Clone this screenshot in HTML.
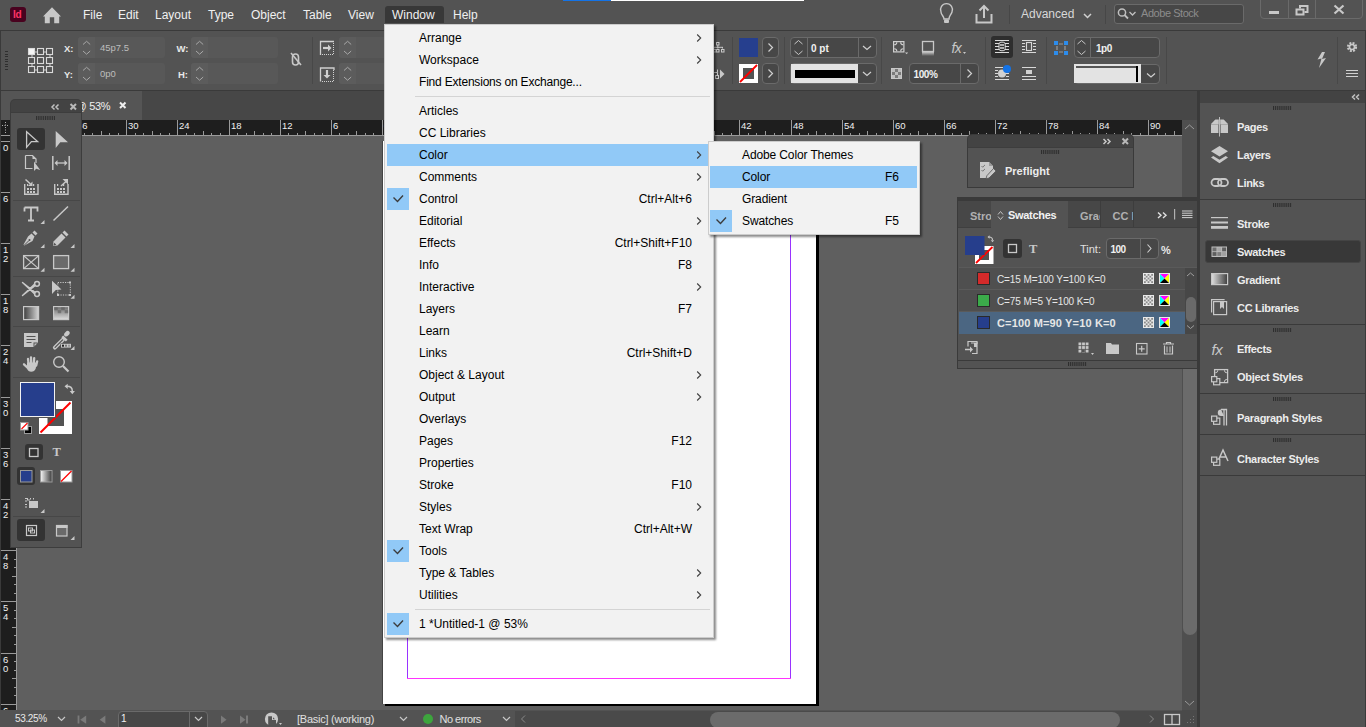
<!DOCTYPE html>
<html><head><meta charset="utf-8">
<style>
*{margin:0;padding:0;box-sizing:border-box}
html,body{width:1366px;height:727px;overflow:hidden;background:#535353;font-family:"Liberation Sans",sans-serif;position:relative}
.a{position:absolute}
.t{position:absolute;white-space:nowrap;line-height:1}
svg{position:absolute;overflow:visible}
</style></head><body>
<div class="a" style="left:0px;top:0px;width:1366px;height:30px;background:#535353;"></div>
<div class="a" style="left:0px;top:30px;width:1366px;height:1px;background:#3a3a3a;"></div>
<div class="a" style="left:10px;top:7px;width:16px;height:15px;border-radius:3px;background:#49021f"></div>
<div class="t" style="left:13px;top:10.04px;font-size:10px;color:#ff3366;font-weight:bold;letter-spacing:-0.2px">Id</div>
<svg width="1366" height="727" style="left:0;top:0" viewBox="0 0 1366 727"><path d="M43 16.5 L52 7.3 L61 16.5 L59.2 16.5 L59.2 23.3 L54.2 23.3 L54.2 17.2 L49.8 17.2 L49.8 23.3 L44.8 23.3 L44.8 16.5 Z" fill="#c8c8c8"/></svg>
<div class="a" style="left:385px;top:6px;width:59px;height:17px;background:#383838;border-radius:3px 3px 0 0"></div>
<div class="t" style="left:83px;top:8.84px;font-size:12px;color:#f0f0f0;font-weight:normal;">File</div>
<div class="t" style="left:118px;top:8.84px;font-size:12px;color:#f0f0f0;font-weight:normal;">Edit</div>
<div class="t" style="left:155px;top:8.84px;font-size:12px;color:#f0f0f0;font-weight:normal;">Layout</div>
<div class="t" style="left:208px;top:8.84px;font-size:12px;color:#f0f0f0;font-weight:normal;">Type</div>
<div class="t" style="left:251px;top:8.84px;font-size:12px;color:#f0f0f0;font-weight:normal;">Object</div>
<div class="t" style="left:303px;top:8.84px;font-size:12px;color:#f0f0f0;font-weight:normal;">Table</div>
<div class="t" style="left:348px;top:8.84px;font-size:12px;color:#f0f0f0;font-weight:normal;">View</div>
<div class="t" style="left:392px;top:8.84px;font-size:12px;color:#f0f0f0;font-weight:normal;">Window</div>
<div class="t" style="left:453px;top:8.84px;font-size:12px;color:#f0f0f0;font-weight:normal;">Help</div>
<div class="a" style="left:563px;top:0px;width:48px;height:1px;background:#1473e6;"></div>
<div class="a" style="left:611px;top:0px;width:193px;height:1px;background:#ffffff;"></div>
<svg width="1366" height="727" style="left:0;top:0" viewBox="0 0 1366 727"><path d="M941 12 a6 6 0 1 1 11 0 c-1 3 -3 4 -3 7 h-5 c0 -3 -3 -4 -3 -7z" fill="none" stroke="#c8c8c8" stroke-width="1.4"/><rect x="944" y="19.5" width="5" height="3.5" rx="1" fill="#c8c8c8"/></svg>
<svg width="1366" height="727" style="left:0;top:0" viewBox="0 0 1366 727"><path d="M976.5 14 v8.5 h15 v-8.5" fill="none" stroke="#c8c8c8" stroke-width="2"/><path d="M984 18 v-11 M979.5 10.5 l4.5 -4.5 l4.5 4.5" fill="none" stroke="#c8c8c8" stroke-width="2"/></svg>
<div class="a" style="left:1009px;top:5px;width:1px;height:19px;background:#474747;"></div>
<div class="t" style="left:1021px;top:8.34px;font-size:12px;color:#d8d8d8;font-weight:normal;">Advanced</div>
<svg width="1366" height="727" style="left:0;top:0" viewBox="0 0 1366 727"><path d="M1084 14 l3.5 3.5 l3.5 -3.5" fill="none" stroke="#d0d0d0" stroke-width="1.5"/></svg>
<div class="a" style="left:1105px;top:5px;width:1px;height:19px;background:#474747;"></div>
<div class="a" style="left:1114px;top:4px;width:130px;height:20px;border:1px solid #6a6a6a;border-radius:3px;background:#474747"></div>
<svg width="1366" height="727" style="left:0;top:0" viewBox="0 0 1366 727"><circle cx="1122" cy="12.5" r="3.6" fill="none" stroke="#c0c0c0" stroke-width="1.5"/><path d="M1124.5 15 l3.5 3.5" stroke="#c0c0c0" stroke-width="1.8"/><path d="M1129.5 12 l3 3 l3 -3" fill="none" stroke="#c0c0c0" stroke-width="1.3"/></svg>
<div class="t" style="left:1141px;top:7.69px;font-size:11px;color:#8c8c8c;font-weight:normal;letter-spacing:-0.45px">Adobe Stock</div>
<div class="a" style="left:1260px;top:-3px;width:103px;height:22px;border:1px solid #6a6a6a;border-radius:0 0 4px 4px"></div>
<div class="a" style="left:1288px;top:0px;width:1px;height:18px;background:#6a6a6a;"></div>
<div class="a" style="left:1315px;top:0px;width:1px;height:18px;background:#6a6a6a;"></div>
<div class="a" style="left:1269px;top:11px;width:10px;height:3px;background:#c8c8c8;"></div>
<svg width="1366" height="727" style="left:0;top:0" viewBox="0 0 1366 727"><rect x="1296.5" y="9.5" width="7" height="5" fill="none" stroke="#c8c8c8" stroke-width="2"/><path d="M1300 8.5 v-2.5 h7.5 v6 h-3" fill="none" stroke="#c8c8c8" stroke-width="2"/></svg>
<svg width="1366" height="727" style="left:0;top:0" viewBox="0 0 1366 727"><path d="M1334.5 5.5 l9 8 M1343.5 5.5 l-9 8" stroke="#c8c8c8" stroke-width="2.2"/></svg>
<div class="a" style="left:0px;top:31px;width:1366px;height:59px;background:#535353;"></div>
<div class="a" style="left:0px;top:30px;width:1px;height:61px;background:#3a3a3a;"></div>
<div class="a" style="left:1365px;top:30px;width:1px;height:61px;background:#3a3a3a;"></div>
<div class="a" style="left:0px;top:90px;width:1366px;height:1px;background:#3a3a3a;"></div>
<div class="a" style="left:5px;top:51.0px;width:3px;height:1px;background:#2e2e2e;"></div>
<div class="a" style="left:5px;top:53.5px;width:3px;height:1px;background:#2e2e2e;"></div>
<div class="a" style="left:5px;top:56.0px;width:3px;height:1px;background:#2e2e2e;"></div>
<div class="a" style="left:5px;top:58.5px;width:3px;height:1px;background:#2e2e2e;"></div>
<div class="a" style="left:5px;top:61.0px;width:3px;height:1px;background:#2e2e2e;"></div>
<div class="a" style="left:5px;top:63.5px;width:3px;height:1px;background:#2e2e2e;"></div>
<div class="a" style="left:5px;top:66.0px;width:3px;height:1px;background:#2e2e2e;"></div>
<div class="a" style="left:5px;top:68.5px;width:3px;height:1px;background:#2e2e2e;"></div>
<svg width="1366" height="727" style="left:0;top:0" viewBox="0 0 1366 727"><rect x="28.5" y="48.5" width="6" height="6" fill="#f4f4f4" stroke="#dadada" stroke-width="1.1"/><rect x="37.5" y="48.5" width="6" height="6" fill="none" stroke="#dadada" stroke-width="1.1"/><rect x="46.5" y="48.5" width="6" height="6" fill="none" stroke="#dadada" stroke-width="1.1"/><rect x="28.5" y="57.5" width="6" height="6" fill="none" stroke="#dadada" stroke-width="1.1"/><rect x="37.5" y="57.5" width="6" height="6" fill="none" stroke="#dadada" stroke-width="1.1"/><rect x="46.5" y="57.5" width="6" height="6" fill="none" stroke="#dadada" stroke-width="1.1"/><rect x="28.5" y="66.5" width="6" height="6" fill="none" stroke="#dadada" stroke-width="1.1"/><rect x="37.5" y="66.5" width="6" height="6" fill="none" stroke="#dadada" stroke-width="1.1"/><rect x="46.5" y="66.5" width="6" height="6" fill="none" stroke="#dadada" stroke-width="1.1"/><path d="M35 52 h2 M44 52 h2" stroke="#d0d0d0" stroke-width="1"/><path d="M35 70 h2 M44 70 h2" stroke="#d0d0d0" stroke-width="1"/><path d="M32 55 v2 M32 64 v2" stroke="#d0d0d0" stroke-width="1"/><path d="M50 55 v2 M50 64 v2" stroke="#d0d0d0" stroke-width="1"/></svg>
<div class="t" style="left:64px;top:43.96px;font-size:9.5px;color:#e8e8e8;font-weight:bold;">X:</div>
<div class="t" style="left:64px;top:69.96px;font-size:9.5px;color:#e8e8e8;font-weight:bold;">Y:</div>
<div class="a" style="left:78px;top:37px;width:87px;height:21px;background:#585858;border-radius:3px"></div>
<div class="a" style="left:78px;top:37px;width:17px;height:21px;background:#5c5c5c;border-radius:3px 0 0 3px"></div>
<svg width="1366" height="727" style="left:0;top:0" viewBox="0 0 1366 727"><path d="M83 44.5 l3.6 -3.2 l3.6 3.2 M83 51 l3.6 3.2 l3.6 -3.2" fill="none" stroke="#a8a8a8" stroke-width="1"/></svg>
<div class="a" style="left:78px;top:63px;width:87px;height:21px;background:#585858;border-radius:3px"></div>
<div class="a" style="left:78px;top:63px;width:17px;height:21px;background:#5c5c5c;border-radius:3px 0 0 3px"></div>
<svg width="1366" height="727" style="left:0;top:0" viewBox="0 0 1366 727"><path d="M83 70.5 l3.6 -3.2 l3.6 3.2 M83 77 l3.6 3.2 l3.6 -3.2" fill="none" stroke="#a8a8a8" stroke-width="1"/></svg>
<div class="t" style="left:100px;top:42.96px;font-size:9.5px;color:#bdbdbd;font-weight:normal;letter-spacing:0px">45p7.5</div>
<div class="t" style="left:100px;top:68.96px;font-size:9.5px;color:#bdbdbd;font-weight:normal;">0p0</div>
<div class="t" style="left:176.5px;top:43.96px;font-size:9.5px;color:#e8e8e8;font-weight:bold;">W:</div>
<div class="t" style="left:178px;top:69.96px;font-size:9.5px;color:#e8e8e8;font-weight:bold;">H:</div>
<div class="a" style="left:191px;top:37px;width:87px;height:21px;background:#585858;border-radius:3px"></div>
<div class="a" style="left:191px;top:37px;width:17px;height:21px;background:#5c5c5c;border-radius:3px 0 0 3px"></div>
<svg width="1366" height="727" style="left:0;top:0" viewBox="0 0 1366 727"><path d="M196 44.5 l3.6 -3.2 l3.6 3.2 M196 51 l3.6 3.2 l3.6 -3.2" fill="none" stroke="#a8a8a8" stroke-width="1"/></svg>
<div class="a" style="left:191px;top:63px;width:87px;height:21px;background:#585858;border-radius:3px"></div>
<div class="a" style="left:191px;top:63px;width:17px;height:21px;background:#5c5c5c;border-radius:3px 0 0 3px"></div>
<svg width="1366" height="727" style="left:0;top:0" viewBox="0 0 1366 727"><path d="M196 70.5 l3.6 -3.2 l3.6 3.2 M196 77 l3.6 3.2 l3.6 -3.2" fill="none" stroke="#a8a8a8" stroke-width="1"/></svg>
<svg width="1366" height="727" style="left:0;top:0" viewBox="0 0 1366 727"><path d="M291 53 l10 12" stroke="#c8c8c8" stroke-width="1.6"/><rect x="292.5" y="54" width="6" height="11" rx="3" fill="none" stroke="#c8c8c8" stroke-width="1.6"/></svg>
<div class="a" style="left:312px;top:37px;width:1px;height:47px;background:#484848;"></div>
<svg width="1366" height="727" style="left:0;top:0" viewBox="0 0 1366 727"><path d="M320.5 55 v-13.5 h13.5" fill="none" stroke="#d0d0d0" stroke-width="1.3"/><path d="M333.5 43 v11.5 h-12" fill="none" stroke="#d0d0d0" stroke-width="1" stroke-dasharray="1 1"/><path d="M323 48 h6" stroke="#d0d0d0" stroke-width="2.2"/><path d="M328 44.5 l3.5 3.5 l-3.5 3.5z" fill="#d0d0d0"/></svg>
<svg width="1366" height="727" style="left:0;top:0" viewBox="0 0 1366 727"><path d="M320.5 81.5 v-13.5 h13.5 v2" fill="none" stroke="#d0d0d0" stroke-width="1.3"/><path d="M333.5 70 v11.5 h-12" fill="none" stroke="#d0d0d0" stroke-width="1" stroke-dasharray="1 1"/><path d="M327 70 v6" stroke="#d0d0d0" stroke-width="2.2"/><path d="M323.5 75 l3.5 3.5 l3.5 -3.5z" fill="#d0d0d0"/></svg>
<div class="a" style="left:339px;top:37px;width:60px;height:21px;background:#585858;border-radius:3px"></div>
<div class="a" style="left:339px;top:37px;width:17px;height:21px;background:#5c5c5c;border-radius:3px 0 0 3px"></div>
<svg width="1366" height="727" style="left:0;top:0" viewBox="0 0 1366 727"><path d="M344 44.5 l3.6 -3.2 l3.6 3.2 M344 51 l3.6 3.2 l3.6 -3.2" fill="none" stroke="#a8a8a8" stroke-width="1"/></svg>
<div class="a" style="left:339px;top:63px;width:60px;height:21px;background:#585858;border-radius:3px"></div>
<div class="a" style="left:339px;top:63px;width:17px;height:21px;background:#5c5c5c;border-radius:3px 0 0 3px"></div>
<svg width="1366" height="727" style="left:0;top:0" viewBox="0 0 1366 727"><path d="M344 70.5 l3.6 -3.2 l3.6 3.2 M344 77 l3.6 3.2 l3.6 -3.2" fill="none" stroke="#a8a8a8" stroke-width="1"/></svg>
<svg width="1366" height="727" style="left:0;top:0" viewBox="0 0 1366 727"><rect x="716.5" y="42.5" width="2.5" height="2.5" fill="none" stroke="#c8c8c8"/><path d="M717.8 45 v2 M714 47.3 h9 M714 47 v1.5 M717.8 47 v1.5 M722.5 47 v1.5" stroke="#c8c8c8" stroke-width="1"/><rect x="713.5" y="49.5" width="2.5" height="2.5" fill="none" stroke="#c8c8c8"/><rect x="716.5" y="49.5" width="2.5" height="2.5" fill="none" stroke="#c8c8c8"/><rect x="721.5" y="49.5" width="2.5" height="2.5" fill="none" stroke="#c8c8c8"/></svg>
<svg width="1366" height="727" style="left:0;top:0" viewBox="0 0 1366 727"><path d="M713 72.5 h4.5 v3 M717.5 72.5 v-3" fill="none" stroke="#c8c8c8" stroke-width="1"/><rect x="715.5" y="75.5" width="3" height="3" fill="none" stroke="#c8c8c8"/><path d="M720 69.5 l4.5 4.5 l-4.5 4.5z" fill="#c8c8c8"/></svg>
<div class="a" style="left:732px;top:37px;width:1px;height:47px;background:#484848;"></div>
<div class="a" style="left:739px;top:38px;width:19px;height:19px;background:#263f8e;"></div>
<div class="a" style="left:762px;top:37px;width:17px;height:21px;border:1px solid #6a6a6a;border-radius:4px;background:#474747"></div>
<svg width="1366" height="727" style="left:0;top:0" viewBox="0 0 1366 727"><path d="M768.5 43.5 l4 4 l-4 4" fill="none" stroke="#d0d0d0" stroke-width="1.2"/></svg>
<div class="a" style="left:762px;top:63px;width:17px;height:21px;border:1px solid #6a6a6a;border-radius:4px;background:#474747"></div>
<svg width="1366" height="727" style="left:0;top:0" viewBox="0 0 1366 727"><path d="M768.5 69.5 l4 4 l-4 4" fill="none" stroke="#d0d0d0" stroke-width="1.2"/></svg>
<div class="a" style="left:739px;top:64px;width:19px;height:19px;background:#ffffff;"></div>
<div class="a" style="left:743px;top:68px;width:11px;height:11px;background:#535353;"></div>
<div class="a" style="left:745px;top:70px;width:7px;height:7px;background:#535353;outline:0"></div>
<svg width="1366" height="727" style="left:0;top:0" viewBox="0 0 1366 727"><path d="M740 82 L757 65" stroke="#ff0000" stroke-width="1.8"/></svg>
<div class="a" style="left:784px;top:37px;width:1px;height:47px;background:#484848;"></div>
<div class="a" style="left:790px;top:37px;width:87px;height:21px;border:1px solid #6a6a6a;border-radius:4px;background:#474747"></div>
<div class="a" style="left:807px;top:38px;width:1px;height:19px;background:#6a6a6a;"></div>
<div class="a" style="left:858px;top:38px;width:1px;height:19px;background:#6a6a6a;"></div>
<svg width="1366" height="727" style="left:0;top:0" viewBox="0 0 1366 727"><path d="M794.5 44 l4 -3.5 l4 3.5 M794.5 51 l4 3.5 l4 -3.5" fill="none" stroke="#c8c8c8" stroke-width="1"/><path d="M863 46 l4 3.5 l4 -3.5" fill="none" stroke="#d0d0d0" stroke-width="1.2"/></svg>
<div class="t" style="left:811px;top:44.03px;font-size:10px;color:#f0f0f0;font-weight:bold;">0 pt</div>
<div class="a" style="left:790px;top:63px;width:87px;height:21px;border:1px solid #6a6a6a;border-radius:4px;background:#474747"></div>
<div class="a" style="left:791px;top:64px;width:67px;height:19px;background:#e3e3e3;"></div>
<div class="a" style="left:795px;top:70px;width:60px;height:8px;background:#000000;"></div>
<svg width="1366" height="727" style="left:0;top:0" viewBox="0 0 1366 727"><path d="M863 72 l4 3.5 l4 -3.5" fill="none" stroke="#d0d0d0" stroke-width="1.2"/></svg>
<div class="a" style="left:881px;top:37px;width:1px;height:47px;background:#484848;"></div>
<svg width="1366" height="727" style="left:0;top:0" viewBox="0 0 1366 727"><rect x="893.6" y="41.6" width="10.3" height="10.3" fill="none" stroke="#d0d0d0" stroke-width="1.2"/><path d="M894.2 44.8 a2.6 2.6 0 0 0 2.6 -2.6 M900.7 42.2 a2.6 2.6 0 0 0 2.6 2.6 M894.2 48.7 a2.6 2.6 0 0 1 2.6 2.6 M903.3 48.7 a2.6 2.6 0 0 0 -2.6 2.6" fill="none" stroke="#d0d0d0" stroke-width="1.1"/><path d="M905 52.5 h3.2 l-1.6 1.8z" fill="#c8c8c8"/></svg>
<svg width="1366" height="727" style="left:0;top:0" viewBox="0 0 1366 727"><defs><linearGradient id="sh" x1="0" y1="0" x2="0" y2="1"><stop offset="0" stop-color="#c8c8c8"/><stop offset="1" stop-color="#535353"/></linearGradient></defs><rect x="922.5" y="41.5" width="11" height="10" fill="none" stroke="#c8c8c8" stroke-width="1.3"/><rect x="922" y="52" width="12" height="4" fill="url(#sh)"/></svg>
<div class="t" style="left:951.5px;top:41.15px;font-size:14px;color:#c8c8c8;font-weight:normal;font-style:italic;letter-spacing:-0.6px">fx</div>
<svg width="1366" height="727" style="left:0;top:0" viewBox="0 0 1366 727"><path d="M963 52 h3 l-1.5 2z" fill="#c8c8c8"/></svg>
<svg width="1366" height="727" style="left:0;top:0" viewBox="0 0 1366 727"><rect x="891.5" y="68.5" width="10" height="10" fill="#7a7a7a" stroke="#c8c8c8" stroke-width="1"/><rect x="892" y="69" width="3" height="3" fill="#bdbdbd"/><rect x="898" y="69" width="3" height="3" fill="#bdbdbd"/><rect x="895" y="72" width="3" height="3" fill="#bdbdbd"/><rect x="892" y="75" width="3" height="3" fill="#bdbdbd"/><rect x="898" y="75" width="3" height="3" fill="#bdbdbd"/></svg>
<div class="a" style="left:909px;top:63px;width:70px;height:21px;border:1px solid #6a6a6a;border-radius:4px;background:#474747"></div>
<div class="a" style="left:960px;top:64px;width:1px;height:19px;background:#6a6a6a;"></div>
<div class="t" style="left:913.5px;top:69.53px;font-size:10px;color:#f0f0f0;font-weight:bold;letter-spacing:-0.4px">100%</div>
<svg width="1366" height="727" style="left:0;top:0" viewBox="0 0 1366 727"><path d="M967.5 69.5 l4 4 l-4 4" fill="none" stroke="#d0d0d0" stroke-width="1.2"/></svg>
<div class="a" style="left:985px;top:37px;width:1px;height:47px;background:#484848;"></div>
<div class="a" style="left:991px;top:36px;width:22px;height:22px;background:#2e2e2e;border-radius:3px"></div>
<svg width="1366" height="727" style="left:0;top:0" viewBox="0 0 1366 727"><path d="M995 40.5 h14 M995 52.5 h14 M995 43.5 h4 M995 46.5 h4 M995 49.5 h4 M1005 43.5 h4 M1005 46.5 h4 M1005 49.5 h4" stroke="#dadada" stroke-width="1.2"/><rect x="999" y="42.2" width="6.2" height="8.5" rx="2" fill="none" stroke="#dadada" stroke-width="1"/><path d="M1000 45 h4 M1000 48 h4" stroke="#dadada" stroke-width="1.3"/></svg>
<svg width="1366" height="727" style="left:0;top:0" viewBox="0 0 1366 727"><path d="M1022 40.5 h14 M1022 52.5 h14 M1022 43.5 h3 M1022 46.5 h3 M1022 49.5 h3 M1033 43.5 h3 M1033 46.5 h3 M1033 49.5 h3" stroke="#d8d8d8" stroke-width="1.2"/><rect x="1026.5" y="42.5" width="5" height="8" fill="none" stroke="#d8d8d8" stroke-width="1.1"/></svg>
<svg width="1366" height="727" style="left:0;top:0" viewBox="0 0 1366 727"><path d="M995 67.5 h8 M995 70.5 h3 M995 73.5 h3 M995 76.5 h3 M1006 70.5 h3 M1006 73.5 h3 M1006 76.5 h3 M995 79.5 h14" stroke="#d8d8d8" stroke-width="1.2"/><circle cx="1002" cy="73.5" r="4" fill="#d0d0d0"/><circle cx="1007" cy="69" r="4" fill="#1473e6"/></svg>
<svg width="1366" height="727" style="left:0;top:0" viewBox="0 0 1366 727"><path d="M1022 67.5 h14 M1022 76.5 h14 M1022 79.5 h14" stroke="#d8d8d8" stroke-width="1.2"/><rect x="1026" y="70" width="6" height="4" fill="#d0d0d0"/></svg>
<div class="a" style="left:1046px;top:37px;width:1px;height:47px;background:#484848;"></div>
<svg width="1366" height="727" style="left:0;top:0" viewBox="0 0 1366 727"><rect x="1054" y="41" width="4" height="4" fill="#2d8ceb"/><rect x="1064" y="41" width="4" height="4" fill="#2d8ceb"/><rect x="1054" y="51" width="4" height="4" fill="#2d8ceb"/><rect x="1064" y="51" width="4" height="4" fill="#2d8ceb"/><path d="M1059 44 h4 M1059 52 h4 M1057 46 v4 M1065 46 v4" stroke="#9a9a9a" stroke-width="1.2"/></svg>
<div class="a" style="left:1074px;top:37px;width:86px;height:21px;border:1px solid #6a6a6a;border-radius:4px;background:#474747"></div>
<div class="a" style="left:1090px;top:38px;width:1px;height:19px;background:#6a6a6a;"></div>
<svg width="1366" height="727" style="left:0;top:0" viewBox="0 0 1366 727"><path d="M1077.5 44 l4 -3.5 l4 3.5 M1077.5 51 l4 3.5 l4 -3.5" fill="none" stroke="#c8c8c8" stroke-width="1"/></svg>
<div class="t" style="left:1096px;top:43.53px;font-size:10px;color:#f0f0f0;font-weight:bold;letter-spacing:-0.5px">1p0</div>
<div class="a" style="left:1074px;top:64px;width:86px;height:20px;border:1px solid #6a6a6a;border-radius:4px;background:#474747"></div>
<div class="a" style="left:1074px;top:64px;width:67px;height:19px;background:#e3e3e3;"></div>
<div class="a" style="left:1076px;top:66px;width:61px;height:2px;background:#555555;"></div>
<div class="a" style="left:1136px;top:66px;width:2px;height:16px;background:#000000;"></div>
<svg width="1366" height="727" style="left:0;top:0" viewBox="0 0 1366 727"><path d="M1147 73.5 l4 3.5 l4 -3.5" fill="none" stroke="#d0d0d0" stroke-width="1.2"/></svg>
<div class="a" style="left:1166px;top:37px;width:1px;height:47px;background:#484848;"></div>
<svg width="1366" height="727" style="left:0;top:0" viewBox="0 0 1366 727"><path d="M1322 52 l-4.5 7.5 l4 -1 l-2.5 9.5 l7 -10 l-4 1 l3 -7z" fill="#c8c8c8"/></svg>
<div class="a" style="left:1337px;top:37px;width:1px;height:47px;background:#484848;"></div>
<svg width="1366" height="727" style="left:0;top:0" viewBox="0 0 1366 727"><circle cx="1352" cy="47" r="3.8" fill="none" stroke="#c8c8c8" stroke-width="2.6" stroke-dasharray="1.8 1.2"/><circle cx="1352" cy="47" r="2.5" fill="none" stroke="#c8c8c8" stroke-width="1.6"/></svg>
<svg width="1366" height="727" style="left:0;top:0" viewBox="0 0 1366 727"><path d="M1346 70.5 h12 M1346 73.5 h12 M1346 76.5 h12" stroke="#d0d0d0" stroke-width="1.2"/></svg>
<div class="a" style="left:0px;top:91px;width:1197px;height:29px;background:#474747;"></div>
<div class="a" style="left:1px;top:91px;width:141px;height:29px;background:#555555;"></div>
<div class="a" style="left:1px;top:120px;width:1181px;height:16px;background:#1e1e1e;"></div>
<div class="a" style="left:16px;top:135px;width:1166px;height:1px;background:#9a9a9a;"></div>
<div class="a" style="left:1px;top:136px;width:15px;height:574px;background:#1e1e1e;"></div>
<div class="a" style="left:16px;top:136px;width:1px;height:574px;background:#9a9a9a;"></div>
<div class="a" style="left:0px;top:91px;width:1px;height:636px;background:#3a3a3a;"></div>
<div class="a" style="left:17px;top:136px;width:1165px;height:574px;background:#5f5f5f;"></div>
<div class="a" style="left:385px;top:143px;width:434px;height:563px;background:#000;"></div>
<div class="a" style="left:383px;top:141px;width:433px;height:563px;background:#fff;"></div>
<div class="a" style="left:407px;top:167px;width:1px;height:511px;background:#9933ff;"></div>
<div class="a" style="left:790px;top:167px;width:1px;height:511px;background:#9933ff;"></div>
<div class="a" style="left:407px;top:678px;width:384px;height:1px;background:#ff33ff;"></div>
<div class="a" style="left:1182px;top:120px;width:15px;height:590px;background:#4f4f4f;"></div>
<div class="a" style="left:1183px;top:240px;width:14px;height:395px;border-radius:7px;background:#6b6b6b"></div>
<div class="a" style="left:1197px;top:91px;width:3px;height:636px;background:#3a3a3a;"></div>
<div class="a" style="left:1200px;top:91px;width:166px;height:12px;background:#434343;"></div>
<div class="a" style="left:0px;top:710px;width:1197px;height:17px;background:#535353;"></div>
<div class="a" style="left:515px;top:710px;width:682px;height:17px;background:#4a4a4a;"></div>
<div class="a" style="left:710px;top:712px;width:410px;height:16px;border-radius:8px;background:#6b6b6b"></div>
<svg width="1366" height="727" style="left:0;top:0" viewBox="0 0 1366 727"><path d="M24.5 120 v15" stroke="#9a9a9a" stroke-width="1"/><path d="M33.5 133 v2" stroke="#9a9a9a" stroke-width="1"/><path d="M41.5 133 v2" stroke="#9a9a9a" stroke-width="1"/><path d="M50.5 131 v4" stroke="#9a9a9a" stroke-width="1"/><path d="M58.5 133 v2" stroke="#9a9a9a" stroke-width="1"/><path d="M67.5 133 v2" stroke="#9a9a9a" stroke-width="1"/><path d="M75.5 120 v15" stroke="#9a9a9a" stroke-width="1"/><path d="M84.5 133 v2" stroke="#9a9a9a" stroke-width="1"/><path d="M92.5 133 v2" stroke="#9a9a9a" stroke-width="1"/><path d="M101.5 131 v4" stroke="#9a9a9a" stroke-width="1"/><path d="M109.5 133 v2" stroke="#9a9a9a" stroke-width="1"/><path d="M118.5 133 v2" stroke="#9a9a9a" stroke-width="1"/><path d="M126.5 120 v15" stroke="#9a9a9a" stroke-width="1"/><path d="M135.5 133 v2" stroke="#9a9a9a" stroke-width="1"/><path d="M143.5 133 v2" stroke="#9a9a9a" stroke-width="1"/><path d="M152.5 131 v4" stroke="#9a9a9a" stroke-width="1"/><path d="M160.5 133 v2" stroke="#9a9a9a" stroke-width="1"/><path d="M169.5 133 v2" stroke="#9a9a9a" stroke-width="1"/><path d="M177.5 120 v15" stroke="#9a9a9a" stroke-width="1"/><path d="M186.5 133 v2" stroke="#9a9a9a" stroke-width="1"/><path d="M194.5 133 v2" stroke="#9a9a9a" stroke-width="1"/><path d="M203.5 131 v4" stroke="#9a9a9a" stroke-width="1"/><path d="M211.5 133 v2" stroke="#9a9a9a" stroke-width="1"/><path d="M220.5 133 v2" stroke="#9a9a9a" stroke-width="1"/><path d="M229.5 120 v15" stroke="#9a9a9a" stroke-width="1"/><path d="M237.5 133 v2" stroke="#9a9a9a" stroke-width="1"/><path d="M246.5 133 v2" stroke="#9a9a9a" stroke-width="1"/><path d="M254.5 131 v4" stroke="#9a9a9a" stroke-width="1"/><path d="M263.5 133 v2" stroke="#9a9a9a" stroke-width="1"/><path d="M271.5 133 v2" stroke="#9a9a9a" stroke-width="1"/><path d="M280.5 120 v15" stroke="#9a9a9a" stroke-width="1"/><path d="M288.5 133 v2" stroke="#9a9a9a" stroke-width="1"/><path d="M297.5 133 v2" stroke="#9a9a9a" stroke-width="1"/><path d="M305.5 131 v4" stroke="#9a9a9a" stroke-width="1"/><path d="M314.5 133 v2" stroke="#9a9a9a" stroke-width="1"/><path d="M322.5 133 v2" stroke="#9a9a9a" stroke-width="1"/><path d="M331.5 120 v15" stroke="#9a9a9a" stroke-width="1"/><path d="M339.5 133 v2" stroke="#9a9a9a" stroke-width="1"/><path d="M348.5 133 v2" stroke="#9a9a9a" stroke-width="1"/><path d="M356.5 131 v4" stroke="#9a9a9a" stroke-width="1"/><path d="M365.5 133 v2" stroke="#9a9a9a" stroke-width="1"/><path d="M373.5 133 v2" stroke="#9a9a9a" stroke-width="1"/><path d="M382.5 120 v15" stroke="#9a9a9a" stroke-width="1"/><path d="M390.5 133 v2" stroke="#9a9a9a" stroke-width="1"/><path d="M399.5 133 v2" stroke="#9a9a9a" stroke-width="1"/><path d="M407.5 131 v4" stroke="#9a9a9a" stroke-width="1"/><path d="M416.5 133 v2" stroke="#9a9a9a" stroke-width="1"/><path d="M424.5 133 v2" stroke="#9a9a9a" stroke-width="1"/><path d="M433.5 120 v15" stroke="#9a9a9a" stroke-width="1"/><path d="M441.5 133 v2" stroke="#9a9a9a" stroke-width="1"/><path d="M450.5 133 v2" stroke="#9a9a9a" stroke-width="1"/><path d="M458.5 131 v4" stroke="#9a9a9a" stroke-width="1"/><path d="M467.5 133 v2" stroke="#9a9a9a" stroke-width="1"/><path d="M475.5 133 v2" stroke="#9a9a9a" stroke-width="1"/><path d="M484.5 120 v15" stroke="#9a9a9a" stroke-width="1"/><path d="M493.5 133 v2" stroke="#9a9a9a" stroke-width="1"/><path d="M501.5 133 v2" stroke="#9a9a9a" stroke-width="1"/><path d="M510.5 131 v4" stroke="#9a9a9a" stroke-width="1"/><path d="M518.5 133 v2" stroke="#9a9a9a" stroke-width="1"/><path d="M527.5 133 v2" stroke="#9a9a9a" stroke-width="1"/><path d="M535.5 120 v15" stroke="#9a9a9a" stroke-width="1"/><path d="M544.5 133 v2" stroke="#9a9a9a" stroke-width="1"/><path d="M552.5 133 v2" stroke="#9a9a9a" stroke-width="1"/><path d="M561.5 131 v4" stroke="#9a9a9a" stroke-width="1"/><path d="M569.5 133 v2" stroke="#9a9a9a" stroke-width="1"/><path d="M578.5 133 v2" stroke="#9a9a9a" stroke-width="1"/><path d="M586.5 120 v15" stroke="#9a9a9a" stroke-width="1"/><path d="M595.5 133 v2" stroke="#9a9a9a" stroke-width="1"/><path d="M603.5 133 v2" stroke="#9a9a9a" stroke-width="1"/><path d="M612.5 131 v4" stroke="#9a9a9a" stroke-width="1"/><path d="M620.5 133 v2" stroke="#9a9a9a" stroke-width="1"/><path d="M629.5 133 v2" stroke="#9a9a9a" stroke-width="1"/><path d="M637.5 120 v15" stroke="#9a9a9a" stroke-width="1"/><path d="M646.5 133 v2" stroke="#9a9a9a" stroke-width="1"/><path d="M654.5 133 v2" stroke="#9a9a9a" stroke-width="1"/><path d="M663.5 131 v4" stroke="#9a9a9a" stroke-width="1"/><path d="M671.5 133 v2" stroke="#9a9a9a" stroke-width="1"/><path d="M680.5 133 v2" stroke="#9a9a9a" stroke-width="1"/><path d="M688.5 120 v15" stroke="#9a9a9a" stroke-width="1"/><path d="M697.5 133 v2" stroke="#9a9a9a" stroke-width="1"/><path d="M705.5 133 v2" stroke="#9a9a9a" stroke-width="1"/><path d="M714.5 131 v4" stroke="#9a9a9a" stroke-width="1"/><path d="M722.5 133 v2" stroke="#9a9a9a" stroke-width="1"/><path d="M731.5 133 v2" stroke="#9a9a9a" stroke-width="1"/><path d="M739.5 120 v15" stroke="#9a9a9a" stroke-width="1"/><path d="M748.5 133 v2" stroke="#9a9a9a" stroke-width="1"/><path d="M756.5 133 v2" stroke="#9a9a9a" stroke-width="1"/><path d="M765.5 131 v4" stroke="#9a9a9a" stroke-width="1"/><path d="M774.5 133 v2" stroke="#9a9a9a" stroke-width="1"/><path d="M782.5 133 v2" stroke="#9a9a9a" stroke-width="1"/><path d="M791.5 120 v15" stroke="#9a9a9a" stroke-width="1"/><path d="M799.5 133 v2" stroke="#9a9a9a" stroke-width="1"/><path d="M808.5 133 v2" stroke="#9a9a9a" stroke-width="1"/><path d="M816.5 131 v4" stroke="#9a9a9a" stroke-width="1"/><path d="M825.5 133 v2" stroke="#9a9a9a" stroke-width="1"/><path d="M833.5 133 v2" stroke="#9a9a9a" stroke-width="1"/><path d="M842.5 120 v15" stroke="#9a9a9a" stroke-width="1"/><path d="M850.5 133 v2" stroke="#9a9a9a" stroke-width="1"/><path d="M859.5 133 v2" stroke="#9a9a9a" stroke-width="1"/><path d="M867.5 131 v4" stroke="#9a9a9a" stroke-width="1"/><path d="M876.5 133 v2" stroke="#9a9a9a" stroke-width="1"/><path d="M884.5 133 v2" stroke="#9a9a9a" stroke-width="1"/><path d="M893.5 120 v15" stroke="#9a9a9a" stroke-width="1"/><path d="M901.5 133 v2" stroke="#9a9a9a" stroke-width="1"/><path d="M910.5 133 v2" stroke="#9a9a9a" stroke-width="1"/><path d="M918.5 131 v4" stroke="#9a9a9a" stroke-width="1"/><path d="M927.5 133 v2" stroke="#9a9a9a" stroke-width="1"/><path d="M935.5 133 v2" stroke="#9a9a9a" stroke-width="1"/><path d="M944.5 120 v15" stroke="#9a9a9a" stroke-width="1"/><path d="M952.5 133 v2" stroke="#9a9a9a" stroke-width="1"/><path d="M961.5 133 v2" stroke="#9a9a9a" stroke-width="1"/><path d="M969.5 131 v4" stroke="#9a9a9a" stroke-width="1"/><path d="M978.5 133 v2" stroke="#9a9a9a" stroke-width="1"/><path d="M986.5 133 v2" stroke="#9a9a9a" stroke-width="1"/><path d="M995.5 120 v15" stroke="#9a9a9a" stroke-width="1"/><path d="M1003.5 133 v2" stroke="#9a9a9a" stroke-width="1"/><path d="M1012.5 133 v2" stroke="#9a9a9a" stroke-width="1"/><path d="M1020.5 131 v4" stroke="#9a9a9a" stroke-width="1"/><path d="M1029.5 133 v2" stroke="#9a9a9a" stroke-width="1"/><path d="M1038.5 133 v2" stroke="#9a9a9a" stroke-width="1"/><path d="M1046.5 120 v15" stroke="#9a9a9a" stroke-width="1"/><path d="M1055.5 133 v2" stroke="#9a9a9a" stroke-width="1"/><path d="M1063.5 133 v2" stroke="#9a9a9a" stroke-width="1"/><path d="M1072.5 131 v4" stroke="#9a9a9a" stroke-width="1"/><path d="M1080.5 133 v2" stroke="#9a9a9a" stroke-width="1"/><path d="M1089.5 133 v2" stroke="#9a9a9a" stroke-width="1"/><path d="M1097.5 120 v15" stroke="#9a9a9a" stroke-width="1"/><path d="M1106.5 133 v2" stroke="#9a9a9a" stroke-width="1"/><path d="M1114.5 133 v2" stroke="#9a9a9a" stroke-width="1"/><path d="M1123.5 131 v4" stroke="#9a9a9a" stroke-width="1"/><path d="M1131.5 133 v2" stroke="#9a9a9a" stroke-width="1"/><path d="M1140.5 133 v2" stroke="#9a9a9a" stroke-width="1"/><path d="M1148.5 120 v15" stroke="#9a9a9a" stroke-width="1"/><path d="M1157.5 133 v2" stroke="#9a9a9a" stroke-width="1"/><path d="M1165.5 133 v2" stroke="#9a9a9a" stroke-width="1"/><path d="M1174.5 131 v4" stroke="#9a9a9a" stroke-width="1"/><path d="M1 141.5 h15" stroke="#9a9a9a" stroke-width="1"/><path d="M14 149.5 h2" stroke="#9a9a9a" stroke-width="1"/><path d="M14 158.5 h2" stroke="#9a9a9a" stroke-width="1"/><path d="M12 166.5 h4" stroke="#9a9a9a" stroke-width="1"/><path d="M14 175.5 h2" stroke="#9a9a9a" stroke-width="1"/><path d="M14 183.5 h2" stroke="#9a9a9a" stroke-width="1"/><path d="M1 192.5 h15" stroke="#9a9a9a" stroke-width="1"/><path d="M14 200.5 h2" stroke="#9a9a9a" stroke-width="1"/><path d="M14 209.5 h2" stroke="#9a9a9a" stroke-width="1"/><path d="M12 218.5 h4" stroke="#9a9a9a" stroke-width="1"/><path d="M14 226.5 h2" stroke="#9a9a9a" stroke-width="1"/><path d="M14 235.5 h2" stroke="#9a9a9a" stroke-width="1"/><path d="M1 243.5 h15" stroke="#9a9a9a" stroke-width="1"/><path d="M14 252.5 h2" stroke="#9a9a9a" stroke-width="1"/><path d="M14 260.5 h2" stroke="#9a9a9a" stroke-width="1"/><path d="M12 269.5 h4" stroke="#9a9a9a" stroke-width="1"/><path d="M14 277.5 h2" stroke="#9a9a9a" stroke-width="1"/><path d="M14 286.5 h2" stroke="#9a9a9a" stroke-width="1"/><path d="M1 294.5 h15" stroke="#9a9a9a" stroke-width="1"/><path d="M14 303.5 h2" stroke="#9a9a9a" stroke-width="1"/><path d="M14 311.5 h2" stroke="#9a9a9a" stroke-width="1"/><path d="M12 320.5 h4" stroke="#9a9a9a" stroke-width="1"/><path d="M14 328.5 h2" stroke="#9a9a9a" stroke-width="1"/><path d="M14 337.5 h2" stroke="#9a9a9a" stroke-width="1"/><path d="M1 345.5 h15" stroke="#9a9a9a" stroke-width="1"/><path d="M14 354.5 h2" stroke="#9a9a9a" stroke-width="1"/><path d="M14 363.5 h2" stroke="#9a9a9a" stroke-width="1"/><path d="M12 371.5 h4" stroke="#9a9a9a" stroke-width="1"/><path d="M14 380.5 h2" stroke="#9a9a9a" stroke-width="1"/><path d="M14 388.5 h2" stroke="#9a9a9a" stroke-width="1"/><path d="M1 397.5 h15" stroke="#9a9a9a" stroke-width="1"/><path d="M14 405.5 h2" stroke="#9a9a9a" stroke-width="1"/><path d="M14 414.5 h2" stroke="#9a9a9a" stroke-width="1"/><path d="M12 422.5 h4" stroke="#9a9a9a" stroke-width="1"/><path d="M14 431.5 h2" stroke="#9a9a9a" stroke-width="1"/><path d="M14 439.5 h2" stroke="#9a9a9a" stroke-width="1"/><path d="M1 448.5 h15" stroke="#9a9a9a" stroke-width="1"/><path d="M14 456.5 h2" stroke="#9a9a9a" stroke-width="1"/><path d="M14 465.5 h2" stroke="#9a9a9a" stroke-width="1"/><path d="M12 473.5 h4" stroke="#9a9a9a" stroke-width="1"/><path d="M14 482.5 h2" stroke="#9a9a9a" stroke-width="1"/><path d="M14 490.5 h2" stroke="#9a9a9a" stroke-width="1"/><path d="M1 499.5 h15" stroke="#9a9a9a" stroke-width="1"/><path d="M14 508.5 h2" stroke="#9a9a9a" stroke-width="1"/><path d="M14 516.5 h2" stroke="#9a9a9a" stroke-width="1"/><path d="M12 525.5 h4" stroke="#9a9a9a" stroke-width="1"/><path d="M14 533.5 h2" stroke="#9a9a9a" stroke-width="1"/><path d="M14 542.5 h2" stroke="#9a9a9a" stroke-width="1"/><path d="M1 550.5 h15" stroke="#9a9a9a" stroke-width="1"/><path d="M14 559.5 h2" stroke="#9a9a9a" stroke-width="1"/><path d="M14 567.5 h2" stroke="#9a9a9a" stroke-width="1"/><path d="M12 576.5 h4" stroke="#9a9a9a" stroke-width="1"/><path d="M14 584.5 h2" stroke="#9a9a9a" stroke-width="1"/><path d="M14 593.5 h2" stroke="#9a9a9a" stroke-width="1"/><path d="M1 601.5 h15" stroke="#9a9a9a" stroke-width="1"/><path d="M14 610.5 h2" stroke="#9a9a9a" stroke-width="1"/><path d="M14 618.5 h2" stroke="#9a9a9a" stroke-width="1"/><path d="M12 627.5 h4" stroke="#9a9a9a" stroke-width="1"/><path d="M14 635.5 h2" stroke="#9a9a9a" stroke-width="1"/><path d="M14 644.5 h2" stroke="#9a9a9a" stroke-width="1"/><path d="M1 653.5 h15" stroke="#9a9a9a" stroke-width="1"/><path d="M14 661.5 h2" stroke="#9a9a9a" stroke-width="1"/><path d="M14 670.5 h2" stroke="#9a9a9a" stroke-width="1"/><path d="M12 678.5 h4" stroke="#9a9a9a" stroke-width="1"/><path d="M14 687.5 h2" stroke="#9a9a9a" stroke-width="1"/><path d="M14 695.5 h2" stroke="#9a9a9a" stroke-width="1"/><path d="M1 704.5 h15" stroke="#9a9a9a" stroke-width="1"/><path d="M1 135.5 h15" stroke="#9a9a9a"/><path d="M5.5 122 v12" stroke="#b0b0b0" stroke-dasharray="1 1.5"/><path d="M2 125.5 h7" stroke="#b0b0b0" stroke-dasharray="1 1.5"/></svg>
<div class="t" style="left:26px;top:120.96px;font-size:9.5px;color:#f0f0f0;font-weight:normal;">42</div>
<div class="t" style="left:77px;top:120.96px;font-size:9.5px;color:#f0f0f0;font-weight:normal;">36</div>
<div class="t" style="left:128px;top:120.96px;font-size:9.5px;color:#f0f0f0;font-weight:normal;">30</div>
<div class="t" style="left:179px;top:120.96px;font-size:9.5px;color:#f0f0f0;font-weight:normal;">24</div>
<div class="t" style="left:231px;top:120.96px;font-size:9.5px;color:#f0f0f0;font-weight:normal;">18</div>
<div class="t" style="left:282px;top:120.96px;font-size:9.5px;color:#f0f0f0;font-weight:normal;">12</div>
<div class="t" style="left:333px;top:120.96px;font-size:9.5px;color:#f0f0f0;font-weight:normal;">6</div>
<div class="t" style="left:384px;top:120.96px;font-size:9.5px;color:#f0f0f0;font-weight:normal;">0</div>
<div class="t" style="left:435px;top:120.96px;font-size:9.5px;color:#f0f0f0;font-weight:normal;">6</div>
<div class="t" style="left:486px;top:120.96px;font-size:9.5px;color:#f0f0f0;font-weight:normal;">12</div>
<div class="t" style="left:537px;top:120.96px;font-size:9.5px;color:#f0f0f0;font-weight:normal;">18</div>
<div class="t" style="left:588px;top:120.96px;font-size:9.5px;color:#f0f0f0;font-weight:normal;">24</div>
<div class="t" style="left:639px;top:120.96px;font-size:9.5px;color:#f0f0f0;font-weight:normal;">30</div>
<div class="t" style="left:690px;top:120.96px;font-size:9.5px;color:#f0f0f0;font-weight:normal;">36</div>
<div class="t" style="left:741px;top:120.96px;font-size:9.5px;color:#f0f0f0;font-weight:normal;">42</div>
<div class="t" style="left:793px;top:120.96px;font-size:9.5px;color:#f0f0f0;font-weight:normal;">48</div>
<div class="t" style="left:844px;top:120.96px;font-size:9.5px;color:#f0f0f0;font-weight:normal;">54</div>
<div class="t" style="left:895px;top:120.96px;font-size:9.5px;color:#f0f0f0;font-weight:normal;">60</div>
<div class="t" style="left:946px;top:120.96px;font-size:9.5px;color:#f0f0f0;font-weight:normal;">66</div>
<div class="t" style="left:997px;top:120.96px;font-size:9.5px;color:#f0f0f0;font-weight:normal;">72</div>
<div class="t" style="left:1048px;top:120.96px;font-size:9.5px;color:#f0f0f0;font-weight:normal;">78</div>
<div class="t" style="left:1099px;top:120.96px;font-size:9.5px;color:#f0f0f0;font-weight:normal;">84</div>
<div class="t" style="left:1150px;top:120.96px;font-size:9.5px;color:#f0f0f0;font-weight:normal;">90</div>
<div class="t" style="left:3px;top:142.96px;font-size:9.5px;color:#f0f0f0;font-weight:normal;">0</div>
<div class="t" style="left:3px;top:193.96px;font-size:9.5px;color:#f0f0f0;font-weight:normal;">6</div>
<div class="t" style="left:3px;top:244.96px;font-size:9.5px;color:#f0f0f0;font-weight:normal;">1</div>
<div class="t" style="left:3px;top:253.96px;font-size:9.5px;color:#f0f0f0;font-weight:normal;">2</div>
<div class="t" style="left:3px;top:295.96px;font-size:9.5px;color:#f0f0f0;font-weight:normal;">1</div>
<div class="t" style="left:3px;top:304.96px;font-size:9.5px;color:#f0f0f0;font-weight:normal;">8</div>
<div class="t" style="left:3px;top:346.96px;font-size:9.5px;color:#f0f0f0;font-weight:normal;">2</div>
<div class="t" style="left:3px;top:355.96px;font-size:9.5px;color:#f0f0f0;font-weight:normal;">4</div>
<div class="t" style="left:3px;top:398.96px;font-size:9.5px;color:#f0f0f0;font-weight:normal;">3</div>
<div class="t" style="left:3px;top:407.96px;font-size:9.5px;color:#f0f0f0;font-weight:normal;">0</div>
<div class="t" style="left:3px;top:449.96px;font-size:9.5px;color:#f0f0f0;font-weight:normal;">3</div>
<div class="t" style="left:3px;top:458.96px;font-size:9.5px;color:#f0f0f0;font-weight:normal;">6</div>
<div class="t" style="left:3px;top:500.96px;font-size:9.5px;color:#f0f0f0;font-weight:normal;">4</div>
<div class="t" style="left:3px;top:509.96px;font-size:9.5px;color:#f0f0f0;font-weight:normal;">2</div>
<div class="t" style="left:3px;top:551.96px;font-size:9.5px;color:#f0f0f0;font-weight:normal;">4</div>
<div class="t" style="left:3px;top:560.96px;font-size:9.5px;color:#f0f0f0;font-weight:normal;">8</div>
<div class="t" style="left:3px;top:602.96px;font-size:9.5px;color:#f0f0f0;font-weight:normal;">5</div>
<div class="t" style="left:3px;top:611.96px;font-size:9.5px;color:#f0f0f0;font-weight:normal;">4</div>
<div class="t" style="left:3px;top:654.96px;font-size:9.5px;color:#f0f0f0;font-weight:normal;">6</div>
<div class="t" style="left:3px;top:663.96px;font-size:9.5px;color:#f0f0f0;font-weight:normal;">0</div>
<div class="t" style="left:3px;top:705.96px;font-size:9.5px;color:#f0f0f0;font-weight:normal;">6</div>
<div class="t" style="left:110.3px;top:100.69px;font-size:11px;color:#f0f0f0;font-weight:normal;transform:translateX(-100%);letter-spacing:-0.3px">*Untitled-1 @ 53%</div>
<svg width="1366" height="727" style="left:0;top:0" viewBox="0 0 1366 727"><path d="M120 102.5 l5.5 5.5 M125.5 102.5 l-5.5 5.5" stroke="#f0f0f0" stroke-width="2"/></svg>
<div class="a" style="left:0px;top:710px;width:1197px;height:17px;background:#535353;"></div>
<div class="a" style="left:515px;top:711px;width:667px;height:16px;background:#4a4a4a;"></div>
<div class="a" style="left:710px;top:712px;width:410px;height:16px;border-radius:8px;background:#6b6b6b"></div>
<div class="a" style="left:1182px;top:710px;width:15px;height:17px;background:#4a4a4a;"></div>
<div class="t" style="left:15px;top:713.53px;font-size:10px;color:#e8e8e8;font-weight:normal;letter-spacing:-0.35px">53.25%</div>
<svg width="1366" height="727" style="left:0;top:0" viewBox="0 0 1366 727"><path d="M58 717 l3.5 3.5 l3.5 -3.5" fill="none" stroke="#c8c8c8" stroke-width="1.2"/></svg>
<svg width="1366" height="727" style="left:0;top:0" viewBox="0 0 1366 727"><rect x="77.6" y="715.5" width="1.8" height="8" fill="#7a7a7a"/><path d="M86.2 715.5 v8.3 l-6 -4.15z" fill="#7a7a7a"/><path d="M105.4 715.5 v8.3 l-5.7 -4.15z" fill="#7a7a7a"/></svg>
<div class="a" style="left:118px;top:711px;width:90px;height:20px;border:1px solid #6a6a6a;border-radius:4px;background:#474747"></div>
<div class="a" style="left:189px;top:712px;width:1px;height:15px;background:#6a6a6a;"></div>
<div class="t" style="left:121px;top:713.53px;font-size:10px;color:#f0f0f0;font-weight:normal;">1</div>
<svg width="1366" height="727" style="left:0;top:0" viewBox="0 0 1366 727"><path d="M195 717 l3.5 3.5 l3.5 -3.5" fill="none" stroke="#c8c8c8" stroke-width="1.2"/></svg>
<svg width="1366" height="727" style="left:0;top:0" viewBox="0 0 1366 727"><path d="M221 715.5 v8.3 l5.5 -4.15z" fill="#7a7a7a"/><path d="M240 715.5 v8.3 l5.5 -4.15z" fill="#7a7a7a"/><rect x="246" y="715.5" width="2" height="8" fill="#7a7a7a"/></svg>
<svg width="1366" height="727" style="left:0;top:0" viewBox="0 0 1366 727"><circle cx="271.5" cy="719" r="6.6" fill="#c8c8c8"/><path d="M268.2 716.2 h3.8 v3.8 h4 v7 h-7.8z" fill="#535353"/><path d="M273 717.3 l2 2 h-2z" fill="#535353"/><rect x="260" y="725.6" width="20" height="2" fill="#535353"/><path d="M279 723 h3 l-1.5 2z" fill="#c8c8c8"/></svg>
<div class="t" style="left:297px;top:713.69px;font-size:11px;color:#e0e0e0;font-weight:normal;letter-spacing:-0.25px">[Basic] (working)</div>
<svg width="1366" height="727" style="left:0;top:0" viewBox="0 0 1366 727"><path d="M400 717 l3.5 3.5 l3.5 -3.5" fill="none" stroke="#c8c8c8" stroke-width="1.2"/></svg>
<svg width="1366" height="727" style="left:0;top:0" viewBox="0 0 1366 727"><circle cx="428" cy="719" r="5" fill="#3da53d"/></svg>
<div class="t" style="left:439.5px;top:713.69px;font-size:11px;color:#e0e0e0;font-weight:normal;letter-spacing:-0.5px">No errors</div>
<svg width="1366" height="727" style="left:0;top:0" viewBox="0 0 1366 727"><path d="M503 717 l3.5 3.5 l3.5 -3.5" fill="none" stroke="#c8c8c8" stroke-width="1.2"/></svg>
<svg width="1366" height="727" style="left:0;top:0" viewBox="0 0 1366 727"><path d="M525 715.5 l-3.5 3.5 l3.5 3.5" fill="none" stroke="#8a8a8a" stroke-width="1"/><path d="M1150 715.5 l3.5 3.5 l-3.5 3.5" fill="none" stroke="#8a8a8a" stroke-width="1"/></svg>
<svg width="1366" height="727" style="left:0;top:0" viewBox="0 0 1366 727"><rect x="1164.5" y="714.5" width="15" height="10" fill="none" stroke="#c8c8c8" stroke-width="1.3"/><path d="M1172 714.5 v10" stroke="#c8c8c8" stroke-width="1.3"/></svg>
<svg width="1366" height="727" style="left:0;top:0" viewBox="0 0 1366 727"><path d="M1194 715 v10 h-10z" fill="none"/><g fill="#777"><rect x="1193" y="716" width="1" height="1"/><rect x="1193" y="719" width="1" height="1"/><rect x="1193" y="722" width="1" height="1"/><rect x="1190" y="719" width="1" height="1"/><rect x="1190" y="722" width="1" height="1"/><rect x="1187" y="722" width="1" height="1"/></g></svg>
<svg width="1366" height="727" style="left:0;top:0" viewBox="0 0 1366 727"><path d="M1185 129 l4.5 -4 l4.5 4" fill="none" stroke="#9a9a9a" stroke-width="1"/><path d="M1185 701 l4.5 4 l4.5 -4" fill="none" stroke="#9a9a9a" stroke-width="1"/></svg>
<div class="a" style="left:10px;top:99px;width:72px;height:449px;background:#3d3d3d;border-radius:5px 5px 0 0"></div>
<div class="a" style="left:11px;top:100px;width:70px;height:12px;background:#434343;border-radius:4px 4px 0 0"></div>
<div class="a" style="left:11px;top:112px;width:70px;height:435px;background:#535353;"></div>
<div class="a" style="left:11px;top:112px;width:70px;height:1px;background:#3d3d3d;"></div>
<svg width="1366" height="727" style="left:0;top:0" viewBox="0 0 1366 727"><path d="M54.5 104.5 l-2.5 2.5 l2.5 2.5 M58.5 104.5 l-2.5 2.5 l2.5 2.5" fill="none" stroke="#c0c0c0" stroke-width="1.5"/><path d="M70.5 104 l5.5 5.5 M76 104 l-5.5 5.5" stroke="#b8b8b8" stroke-width="2"/><rect x="36.0" y="116" width="0.9" height="4" fill="#2e2e2e"/><rect x="37.8" y="116" width="0.9" height="4" fill="#2e2e2e"/><rect x="39.6" y="116" width="0.9" height="4" fill="#2e2e2e"/><rect x="41.4" y="116" width="0.9" height="4" fill="#2e2e2e"/><rect x="43.2" y="116" width="0.9" height="4" fill="#2e2e2e"/><rect x="45.0" y="116" width="0.9" height="4" fill="#2e2e2e"/><rect x="46.8" y="116" width="0.9" height="4" fill="#2e2e2e"/><rect x="48.6" y="116" width="0.9" height="4" fill="#2e2e2e"/><rect x="50.4" y="116" width="0.9" height="4" fill="#2e2e2e"/><rect x="52.2" y="116" width="0.9" height="4" fill="#2e2e2e"/><rect x="54.0" y="116" width="0.9" height="4" fill="#2e2e2e"/><rect x="13" y="200" width="67" height="1" fill="#474747"/><rect x="13" y="276" width="67" height="1" fill="#474747"/><rect x="13" y="326" width="67" height="1" fill="#474747"/><rect x="13" y="377" width="67" height="1" fill="#474747"/><rect x="13" y="516" width="67" height="1" fill="#474747"/></svg>
<div class="a" style="left:17px;top:128px;width:28px;height:22px;background:#333333;border-radius:3px"></div>
<div class="a" style="left:17px;top:519px;width:28px;height:22px;background:#333333;border-radius:3px"></div>
<div class="a" style="left:25px;top:444px;width:18px;height:16px;background:#333333;border-radius:3px"></div>
<div class="a" style="left:17px;top:467px;width:18px;height:18px;background:#333333;border-radius:3px"></div>
<svg width="1366" height="727" style="left:0;top:0" viewBox="0 0 1366 727"><path d="M26.6 131.8 V147.3 L31.4 141.6 H37.6 Z" fill="none" stroke="#c8c8c8" stroke-width="1.3" stroke-linejoin="miter"/><path d="M55.7 131 V148 L60.3 142.2 H68 Z" fill="#c8c8c8"/><path d="M25.5 155.5 h7 l3.5 3.5 v4 M25.5 155.5 v13 h7" fill="none" stroke="#c8c8c8" stroke-width="1.2"/><path d="M32.5 155.5 v3.5 h3.5" fill="#c8c8c8"/><path d="M34 161.5 v9.5 l2.2 -2.2 l4 1.3z" fill="#c8c8c8"/><path d="M52.8 156 v14 M69.2 156 v14" stroke="#c8c8c8" stroke-width="1.5"/><path d="M56 163 h10" stroke="#c8c8c8" stroke-width="1.3"/><path d="M54.5 163 l3 -3 v6z M67.5 163 l-3 -3 v6z" fill="#c8c8c8"/><path d="M24.7 184 v10.3 h13.3 v-10.3" fill="none" stroke="#c8c8c8" stroke-width="1.4"/><rect x="27" y="188" width="2" height="2" fill="#c8c8c8"/><rect x="30" y="188" width="2" height="2" fill="#c8c8c8"/><rect x="33" y="188" width="2" height="2" fill="#c8c8c8"/><rect x="27" y="191" width="2" height="2" fill="#c8c8c8"/><rect x="30" y="191" width="2" height="2" fill="#c8c8c8"/><rect x="33" y="191" width="2" height="2" fill="#c8c8c8"/><rect x="27" y="184" width="1.2" height="2" fill="#c8c8c8"/><rect x="33" y="184" width="1.2" height="2" fill="#c8c8c8"/><path d="M25.5 179.5 l5 4.5" stroke="#c8c8c8" stroke-width="1.5"/><path d="M32.5 186 v-4.5 l-4.5 4.5z" fill="#c8c8c8"/><path d="M54.7 184 v10.3 h13.3 v-10.3" fill="none" stroke="#c8c8c8" stroke-width="1.4"/><rect x="57" y="188" width="2" height="2" fill="#c8c8c8"/><rect x="60" y="188" width="2" height="2" fill="#c8c8c8"/><rect x="63" y="188" width="2" height="2" fill="#c8c8c8"/><rect x="57" y="191" width="2" height="2" fill="#c8c8c8"/><rect x="60" y="191" width="2" height="2" fill="#c8c8c8"/><rect x="63" y="191" width="2" height="2" fill="#c8c8c8"/><rect x="57" y="184" width="1.2" height="2" fill="#c8c8c8"/><rect x="63" y="184" width="1.2" height="2" fill="#c8c8c8"/><path d="M61 186 l5 -4.5" stroke="#c8c8c8" stroke-width="1.5"/><path d="M68 179 h-5.5 l5.5 5.5z" fill="#c8c8c8"/><path d="M24.5 207.5 h13 v4 M24.5 207.5 v4 M31 208 v12.5 M28 220.5 h6" fill="none" stroke="#c8c8c8" stroke-width="1.8"/><path d="M40.5 224.0 h4 v-4z" fill="#c8c8c8"/><path d="M53.5 220.5 L68 206.5" stroke="#c8c8c8" stroke-width="1.5"/><path d="M37.5 233.5 l-3 -3 l-2 2 l3 3z" fill="#c8c8c8"/><path d="M31.5 233.5 l3 3 l-2 4.5 l-8 4.5 l-1 -1 l4.5 -8z" fill="#c8c8c8"/><path d="M24.5 245 l4.5 -4.5" stroke="#535353" stroke-width="1"/><circle cx="29.5" cy="240" r="1" fill="#535353"/><path d="M40.5 248.0 h4 v-4z" fill="#c8c8c8"/><path d="M64.5 230.5 l4 4 l-2 2 l-4 -4z" fill="#c8c8c8"/><path d="M61.5 233.5 l4 4 l-8 8 l-4.5 0.5 l0.5 -4.5z" fill="#c8c8c8"/><path d="M53.3 245.7 l1 -3 l2 2z" fill="#535353"/><path d="M70.5 248.0 h4 v-4z" fill="#c8c8c8"/><rect x="23.6" y="255.6" width="15" height="13" fill="none" stroke="#c8c8c8" stroke-width="1.3"/><path d="M24 256 l14.3 12.4 M38.3 256 l-14.3 12.4" stroke="#c8c8c8" stroke-width="1.1"/><path d="M40.5 271.8 h4 v-4z" fill="#c8c8c8"/><rect x="53.6" y="255.6" width="15" height="13" fill="#6a6a6a" stroke="#c8c8c8" stroke-width="1.3"/><path d="M70.5 271.8 h4 v-4z" fill="#c8c8c8"/><circle cx="37" cy="283.8" r="2.4" fill="none" stroke="#c8c8c8" stroke-width="1.5"/><circle cx="37" cy="294" r="2.4" fill="none" stroke="#c8c8c8" stroke-width="1.5"/><path d="M22.5 282.5 L35 292.3 L34.2 293.5z M22.5 295.5 L35 285.7 L34.2 284.5z" fill="#c8c8c8" stroke="#c8c8c8" stroke-width="1.4" stroke-linejoin="round"/><rect x="57.8" y="282.5" width="12.5" height="12.5" fill="none" stroke="#c8c8c8" stroke-width="1" stroke-dasharray="1.2 1.2"/><rect x="69" y="281.5" width="2" height="2" fill="#c8c8c8"/><rect x="57" y="294" width="2" height="2" fill="#c8c8c8"/><rect x="69" y="294" width="2" height="2" fill="#c8c8c8"/><path d="M52 280.8 V294 L55.8 290 L61.5 289.6 Z" fill="#c8c8c8"/><path d="M70.5 298.8 h4 v-4z" fill="#c8c8c8"/><defs><linearGradient id="gr1"><stop offset="0" stop-color="#3d3d3d"/><stop offset="1" stop-color="#d5d5d5"/></linearGradient><linearGradient id="gr2" x1="0" y1="0" x2="0" y2="1"><stop offset="0" stop-color="#6a6a6a"/><stop offset="1" stop-color="#dcdcdc"/></linearGradient><linearGradient id="gr3"><stop offset="0" stop-color="#f8f8f8"/><stop offset="1" stop-color="#3a3a3a"/></linearGradient><linearGradient id="gr4"><stop offset="0" stop-color="#ffffff"/><stop offset="1" stop-color="#222"/></linearGradient></defs><rect x="23.6" y="306.6" width="15" height="13" fill="url(#gr1)" stroke="#c8c8c8" stroke-width="1.2"/><rect x="53.6" y="306.6" width="15" height="13" fill="url(#gr2)" stroke="#c8c8c8" stroke-width="1.2"/><rect x="54.2" y="307.2" width="3.5" height="3" fill="#5a5a5a" opacity="0.6"/><rect x="57.7" y="310.2" width="3.5" height="3" fill="#5a5a5a" opacity="0.6"/><rect x="61.2" y="307.2" width="3.5" height="3" fill="#5a5a5a" opacity="0.6"/><rect x="64.7" y="310.2" width="3.5" height="3" fill="#5a5a5a" opacity="0.6"/><path d="M24 333 h14 v9.5 l-4.5 4.5 h-9.5z" fill="#c8c8c8"/><path d="M26.5 336.5 h9 M26.5 339.5 h9 M26.5 342.5 h5" stroke="#535353" stroke-width="1.2"/><path d="M33.5 347 v-4.5 h4.5" fill="#535353"/><path d="M34.5 346 v-2.5 h2.5z" fill="#c8c8c8"/><ellipse cx="66.9" cy="333.7" rx="2.2" ry="3.2" transform="rotate(45 66.9 333.7)" fill="#c8c8c8"/><path d="M62.3 336.3 l4.4 4.4" stroke="#c8c8c8" stroke-width="2.6"/><path d="M63.2 339.3 L54.8 347.7" stroke="#c8c8c8" stroke-width="3.8" stroke-linecap="round"/><path d="M62.6 339.9 L55.1 347.4" stroke="#535353" stroke-width="1.3" stroke-linecap="round"/><rect x="60.5" y="343.3" width="10.7" height="4.6" fill="#535353"/><rect x="61" y="343.8" width="10" height="3.8" fill="#c8c8c8"/><rect x="62" y="344.7" width="2" height="2" fill="#222"/><rect x="65" y="344.7" width="2" height="2" fill="#777"/><rect x="68" y="344.7" width="2" height="2" fill="#999"/><path d="M70.5 350.0 h4 v-4z" fill="#c8c8c8"/><path d="M28 358.8 L28.6 364 M31 357.3 L31.2 363.5 M34.2 358.2 L33.8 364 M37.2 361.3 L36.2 365.5 M24 364.3 L27.8 367.8" stroke="#c8c8c8" stroke-width="2.3" stroke-linecap="round"/><path d="M27 362.5 h10 l-1.3 6 q-1.2 3.3 -4.5 3.3 q-3 0 -4.2 -3z" fill="#c8c8c8"/><circle cx="59" cy="362" r="5.3" fill="none" stroke="#c8c8c8" stroke-width="1.4"/><path d="M63 366 l5.5 5.5" stroke="#c8c8c8" stroke-width="2.2"/></svg>
<svg width="1366" height="727" style="left:0;top:0" viewBox="0 0 1366 727"><rect x="39" y="401" width="33" height="33" fill="#ffffff"/><rect x="47.5" y="409" width="16.5" height="17" fill="#535353"/><path d="M40.5 432.5 L70.5 402.5" stroke="#ff0000" stroke-width="2"/><rect x="19" y="381" width="37" height="37" fill="#535353"/><rect x="20" y="382" width="35" height="35" fill="#f2f2f2"/><rect x="21" y="383" width="33" height="33" fill="#263e8c"/><path d="M67 386.3 Q72.3 386.3 72.3 391" fill="none" stroke="#c8c8c8" stroke-width="1.5"/><path d="M64.5 386.3 l3.2 -2.6 v5.2z M72.3 394.3 l-2.6 -3.2 h5.2z" fill="#c8c8c8"/><rect x="24" y="426" width="8" height="8" fill="#9a9a9a"/><rect x="25" y="427" width="6" height="6" fill="#000"/><rect x="20.5" y="422.5" width="7.5" height="7.5" fill="#fff" stroke="#9a9a9a"/><path d="M21.5 429 l6 -6" stroke="#f00" stroke-width="1.1"/><rect x="29.5" y="448.5" width="8.5" height="8" fill="none" stroke="#c8c8c8" stroke-width="1.3"/></svg>
<div class="t" style="left:52.5px;top:446.42px;font-size:12.5px;color:#c8c8c8;font-weight:bold;font-family:&quot;Liberation Serif&quot;,serif">T</div>
<svg width="1366" height="727" style="left:0;top:0" viewBox="0 0 1366 727"><rect x="20.5" y="470.5" width="11.5" height="11.5" fill="#263e8c" stroke="#9a9a9a" stroke-width="1"/><rect x="40.5" y="470.5" width="11.5" height="11.5" fill="url(#gr3)" stroke="#9a9a9a" stroke-width="1"/><rect x="60.5" y="470.5" width="11.5" height="11.5" fill="#fff" stroke="#9a9a9a" stroke-width="1"/><path d="M61 481.5 l10.5 -10.5" stroke="#f00" stroke-width="1.3"/><path d="M25 498.5 h2 M25 501 h2 M25 504.5 h2 M25 507 h2" stroke="#c8c8c8" stroke-width="1"/><path d="M27.5 498 v2 M30.5 498 v1.5 M33.5 498 v1.5" stroke="#c8c8c8"/><rect x="29" y="501" width="9" height="7" fill="#c8c8c8"/><path d="M27 500 h3" stroke="#c8c8c8"/><path d="M40.5 513.0 h4 v-4z" fill="#c8c8c8"/><rect x="26.5" y="525.5" width="10" height="10" fill="none" stroke="#c8c8c8" stroke-width="1.2"/><rect x="28.5" y="528" width="4" height="3" fill="none" stroke="#c8c8c8" stroke-width="1"/><rect x="30.5" y="530" width="4" height="3" fill="none" stroke="#c8c8c8" stroke-width="1"/><rect x="56.5" y="525.5" width="10.5" height="10.5" fill="#6a6a6a" stroke="#c8c8c8" stroke-width="1.2"/><rect x="56" y="525" width="11.5" height="3" fill="#c8c8c8"/><path d="M70.5 540.0 h4 v-4z" fill="#c8c8c8"/></svg>
<div class="a" style="left:1200px;top:91px;width:166px;height:12px;background:#434343;"></div>
<div class="a" style="left:1200px;top:103px;width:166px;height:624px;background:#535353;"></div>
<svg width="1366" height="727" style="left:0;top:0" viewBox="0 0 1366 727"><path d="M1355 94.5 l-2.5 2.5 l2.5 2.5 M1359 94.5 l-2.5 2.5 l2.5 2.5" fill="none" stroke="#c0c0c0" stroke-width="1.5"/><rect x="1273.0" y="106" width="1" height="4" fill="#2e2e2e"/><rect x="1274.9" y="106" width="1" height="4" fill="#2e2e2e"/><rect x="1276.8" y="106" width="1" height="4" fill="#2e2e2e"/><rect x="1278.7" y="106" width="1" height="4" fill="#2e2e2e"/><rect x="1280.6" y="106" width="1" height="4" fill="#2e2e2e"/><rect x="1282.5" y="106" width="1" height="4" fill="#2e2e2e"/><rect x="1284.4" y="106" width="1" height="4" fill="#2e2e2e"/><rect x="1286.3" y="106" width="1" height="4" fill="#2e2e2e"/><rect x="1288.2" y="106" width="1" height="4" fill="#2e2e2e"/><rect x="1290.1" y="106" width="1" height="4" fill="#2e2e2e"/><rect x="1273.0" y="203" width="1" height="4" fill="#2e2e2e"/><rect x="1274.9" y="203" width="1" height="4" fill="#2e2e2e"/><rect x="1276.8" y="203" width="1" height="4" fill="#2e2e2e"/><rect x="1278.7" y="203" width="1" height="4" fill="#2e2e2e"/><rect x="1280.6" y="203" width="1" height="4" fill="#2e2e2e"/><rect x="1282.5" y="203" width="1" height="4" fill="#2e2e2e"/><rect x="1284.4" y="203" width="1" height="4" fill="#2e2e2e"/><rect x="1286.3" y="203" width="1" height="4" fill="#2e2e2e"/><rect x="1288.2" y="203" width="1" height="4" fill="#2e2e2e"/><rect x="1290.1" y="203" width="1" height="4" fill="#2e2e2e"/><rect x="1273.0" y="328" width="1" height="4" fill="#2e2e2e"/><rect x="1274.9" y="328" width="1" height="4" fill="#2e2e2e"/><rect x="1276.8" y="328" width="1" height="4" fill="#2e2e2e"/><rect x="1278.7" y="328" width="1" height="4" fill="#2e2e2e"/><rect x="1280.6" y="328" width="1" height="4" fill="#2e2e2e"/><rect x="1282.5" y="328" width="1" height="4" fill="#2e2e2e"/><rect x="1284.4" y="328" width="1" height="4" fill="#2e2e2e"/><rect x="1286.3" y="328" width="1" height="4" fill="#2e2e2e"/><rect x="1288.2" y="328" width="1" height="4" fill="#2e2e2e"/><rect x="1290.1" y="328" width="1" height="4" fill="#2e2e2e"/><rect x="1273.0" y="397" width="1" height="4" fill="#2e2e2e"/><rect x="1274.9" y="397" width="1" height="4" fill="#2e2e2e"/><rect x="1276.8" y="397" width="1" height="4" fill="#2e2e2e"/><rect x="1278.7" y="397" width="1" height="4" fill="#2e2e2e"/><rect x="1280.6" y="397" width="1" height="4" fill="#2e2e2e"/><rect x="1282.5" y="397" width="1" height="4" fill="#2e2e2e"/><rect x="1284.4" y="397" width="1" height="4" fill="#2e2e2e"/><rect x="1286.3" y="397" width="1" height="4" fill="#2e2e2e"/><rect x="1288.2" y="397" width="1" height="4" fill="#2e2e2e"/><rect x="1290.1" y="397" width="1" height="4" fill="#2e2e2e"/><rect x="1273.0" y="438" width="1" height="4" fill="#2e2e2e"/><rect x="1274.9" y="438" width="1" height="4" fill="#2e2e2e"/><rect x="1276.8" y="438" width="1" height="4" fill="#2e2e2e"/><rect x="1278.7" y="438" width="1" height="4" fill="#2e2e2e"/><rect x="1280.6" y="438" width="1" height="4" fill="#2e2e2e"/><rect x="1282.5" y="438" width="1" height="4" fill="#2e2e2e"/><rect x="1284.4" y="438" width="1" height="4" fill="#2e2e2e"/><rect x="1286.3" y="438" width="1" height="4" fill="#2e2e2e"/><rect x="1288.2" y="438" width="1" height="4" fill="#2e2e2e"/><rect x="1290.1" y="438" width="1" height="4" fill="#2e2e2e"/><rect x="1200" y="199" width="166" height="1" fill="#3a3a3a"/><rect x="1200" y="324" width="166" height="1" fill="#3a3a3a"/><rect x="1200" y="393" width="166" height="1" fill="#3a3a3a"/><rect x="1200" y="434" width="166" height="1" fill="#3a3a3a"/><rect x="1200" y="475" width="166" height="1" fill="#3a3a3a"/><rect x="1365" y="91" width="1" height="636" fill="#3a3a3a"/></svg>
<div class="a" style="left:1205px;top:240px;width:156px;height:23px;background:#383838;border:1px solid #444;border-radius:3px"></div>
<div class="t" style="left:1237px;top:121.69px;font-size:11px;color:#ececec;font-weight:bold;letter-spacing:-0.3px">Pages</div>
<div class="t" style="left:1237px;top:149.69px;font-size:11px;color:#ececec;font-weight:bold;letter-spacing:-0.3px">Layers</div>
<div class="t" style="left:1237px;top:177.69px;font-size:11px;color:#ececec;font-weight:bold;letter-spacing:-0.3px">Links</div>
<div class="t" style="left:1237px;top:218.69px;font-size:11px;color:#ececec;font-weight:bold;letter-spacing:-0.3px">Stroke</div>
<div class="t" style="left:1237px;top:246.69px;font-size:11px;color:#ececec;font-weight:bold;letter-spacing:-0.3px">Swatches</div>
<div class="t" style="left:1237px;top:274.69px;font-size:11px;color:#ececec;font-weight:bold;letter-spacing:-0.3px">Gradient</div>
<div class="t" style="left:1237px;top:302.69px;font-size:11px;color:#ececec;font-weight:bold;letter-spacing:-0.3px">CC Libraries</div>
<div class="t" style="left:1237px;top:343.69px;font-size:11px;color:#ececec;font-weight:bold;letter-spacing:-0.3px">Effects</div>
<div class="t" style="left:1237px;top:371.69px;font-size:11px;color:#ececec;font-weight:bold;letter-spacing:-0.3px">Object Styles</div>
<div class="t" style="left:1237px;top:413.19px;font-size:11px;color:#ececec;font-weight:bold;letter-spacing:-0.3px">Paragraph Styles</div>
<div class="t" style="left:1237px;top:454.19px;font-size:11px;color:#ececec;font-weight:bold;letter-spacing:-0.3px">Character Styles</div>
<svg width="1366" height="727" style="left:0;top:0" viewBox="0 0 1366 727"><path d="M1211 124 l4.5 -4.5 v4.5z M1228 124 l-4.5 -4.5 v4.5z" fill="#c8c8c8"/><rect x="1211" y="124.5" width="17" height="8.5" fill="#c8c8c8"/><path d="M1219.5 117 v19" stroke="#535353" stroke-width="2.2"/><path d="M1219.5 117 v19.5" stroke="#c8c8c8" stroke-width="0.9"/><path d="M1215.5 119.5 h3.3 v5 h-7.8z M1223.5 119.5 h-3.3 v5 h7.8z" fill="#c8c8c8"/><path d="M1219.5 146 l8.5 5.2 l-8.5 5.2 l-8.5 -5.2z" fill="#c8c8c8"/><path d="M1213.3 156 l6.2 3.8 l6.2 -3.8 l2.3 1.4 l-8.5 5.8 l-8.5 -5.8z" fill="#c8c8c8"/><rect x="1211.5" y="179" width="10" height="7" rx="3.5" fill="none" stroke="#c8c8c8" stroke-width="1.8"/><rect x="1218" y="179" width="10" height="7" rx="3.5" fill="none" stroke="#c8c8c8" stroke-width="1.8"/><rect x="1211" y="217" width="17" height="1.2" fill="#c8c8c8"/><rect x="1211" y="221.5" width="17" height="2" fill="#c8c8c8"/><rect x="1211" y="226" width="17" height="2.8" fill="#c8c8c8"/><rect x="1211.5" y="246.5" width="15.5" height="10.5" fill="#bdbdbd"/><rect x="1212.5" y="247.5" width="4" height="3.8" fill="#6e6e6e"/><rect x="1217.3" y="247.5" width="4" height="3.8" fill="#a8a8a8"/><rect x="1222.1" y="247.5" width="4" height="3.8" fill="#5e5e5e"/><rect x="1212.5" y="252.1" width="4" height="3.8" fill="#5e5e5e"/><rect x="1217.3" y="252.1" width="4" height="3.8" fill="#7e7e7e"/><rect x="1222.1" y="252.1" width="4" height="3.8" fill="#a0a0a0"/><defs><linearGradient id="gd"><stop offset="0" stop-color="#e0e0e0"/><stop offset="1" stop-color="#3e3e3e"/></linearGradient></defs><rect x="1211.6" y="273.6" width="16" height="11" fill="url(#gd)" stroke="#c8c8c8" stroke-width="1.2"/><path d="M1211.6 312.6 v-13 h13" fill="none" stroke="#c8c8c8" stroke-width="1.2"/><rect x="1213.6" y="301.6" width="13" height="13" fill="none" stroke="#c8c8c8" stroke-width="1.2"/><path d="M1220 302 h4 v7 l-2 -2 l-2 2z" fill="#c8c8c8"/></svg>
<div class="t" style="left:1211.5px;top:341.80px;font-size:15px;color:#c8c8c8;font-weight:normal;font-style:italic;letter-spacing:-0.5px">fx</div>
<svg width="1366" height="727" style="left:0;top:0" viewBox="0 0 1366 727"><rect x="1214.6" y="369.6" width="13" height="13" fill="none" stroke="#c8c8c8" stroke-width="1.3"/><path d="M1215.3 372.8 a2.5 2.5 0 0 0 2.5 -2.5 M1224.4 370.3 a2.5 2.5 0 0 0 2.5 2.5 M1226.9 379.4 a2.5 2.5 0 0 0 -2.5 2.5" fill="none" stroke="#c8c8c8" stroke-width="1"/><rect x="1213.6" y="378.6" width="6.2" height="6.2" fill="#535353" stroke="#c8c8c8" stroke-width="1.2"/><rect x="1211.6" y="376.6" width="5.2" height="5.2" fill="#535353" stroke="#c8c8c8" stroke-width="1.2"/><path d="M1221 409.5 h5.5 v16 M1224 409.5 v16" fill="none" stroke="#c8c8c8" stroke-width="1.3"/><path d="M1221 409.5 a3.2 3.2 0 0 0 0 6.4 h3" fill="#c8c8c8"/><rect x="1213.6" y="418.1" width="6.2" height="6.2" fill="#535353" stroke="#c8c8c8" stroke-width="1.2"/><rect x="1211.6" y="416.1" width="5.2" height="5.2" fill="#535353" stroke="#c8c8c8" stroke-width="1.2"/><path d="M1218 461 l5 -11 l5 11 M1220 457 h6" fill="none" stroke="#c8c8c8" stroke-width="1.5"/><rect x="1213.6" y="459.1" width="6.2" height="6.2" fill="#535353" stroke="#c8c8c8" stroke-width="1.2"/><rect x="1211.6" y="457.1" width="5.2" height="5.2" fill="#535353" stroke="#c8c8c8" stroke-width="1.2"/></svg>
<div class="a" style="left:967px;top:134px;width:167px;height:54px;background:#3a3a3a;border-radius:5px 5px 0 0"></div>
<div class="a" style="left:968px;top:135px;width:165px;height:12px;background:#434343;border-radius:4px 4px 0 0"></div>
<div class="a" style="left:968px;top:147px;width:165px;height:40px;background:#535353;"></div>
<div class="a" style="left:968px;top:147px;width:165px;height:1px;background:#3d3d3d;"></div>
<svg width="1366" height="727" style="left:0;top:0" viewBox="0 0 1366 727"><path d="M1103.5 139 l2.5 2.5 l-2.5 2.5 M1107.5 139 l2.5 2.5 l-2.5 2.5" fill="none" stroke="#c8c8c8" stroke-width="1.5"/><path d="M1122.5 138.5 l5.5 5.5 M1128 138.5 l-5.5 5.5" stroke="#b8b8b8" stroke-width="2"/><rect x="1041.0" y="150" width="1" height="4" fill="#2e2e2e"/><rect x="1042.9" y="150" width="1" height="4" fill="#2e2e2e"/><rect x="1044.8" y="150" width="1" height="4" fill="#2e2e2e"/><rect x="1046.7" y="150" width="1" height="4" fill="#2e2e2e"/><rect x="1048.6" y="150" width="1" height="4" fill="#2e2e2e"/><rect x="1050.5" y="150" width="1" height="4" fill="#2e2e2e"/><rect x="1052.4" y="150" width="1" height="4" fill="#2e2e2e"/><rect x="1054.3" y="150" width="1" height="4" fill="#2e2e2e"/><rect x="1056.2" y="150" width="1" height="4" fill="#2e2e2e"/><rect x="1058.1" y="150" width="1" height="4" fill="#2e2e2e"/><path d="M980 162 h9 l4 4 v5 l-5 5 v2 h-8z" fill="#c8c8c8"/><path d="M989 162 v4 h4" fill="#9a9a9a"/><path d="M981.5 166 l1.2 1.2 l2.3 -2.3 M981.5 170 l1.2 1.2 l2.3 -2.3" fill="none" stroke="#6a6a6a" stroke-width="0.9"/><path d="M993.5 168.5 l2.5 2.5 l-7 7 l-3 0.8 l0.8 -3z" fill="#c8c8c8" stroke="#535353" stroke-width="0.8"/></svg>
<div class="t" style="left:1005px;top:165.69px;font-size:11px;color:#ececec;font-weight:bold;">Preflight</div>
<div class="a" style="left:957px;top:197px;width:241px;height:172px;background:#3a3a3a;"></div>
<div class="a" style="left:958px;top:201px;width:239px;height:27px;background:#474747;"></div>
<div class="a" style="left:958px;top:228px;width:239px;height:132px;background:#535353;"></div>
<div class="a" style="left:991px;top:201px;width:77px;height:27px;background:#535353;"></div>
<div class="a" style="left:958px;top:227px;width:33px;height:1px;background:#3f3f3f;"></div>
<div class="a" style="left:1068px;top:227px;width:129px;height:1px;background:#3f3f3f;"></div>
<div class="a" style="left:1100px;top:201px;width:1px;height:26px;background:#3d3d3d;"></div>
<div class="a" style="left:1133px;top:201px;width:1px;height:26px;background:#3d3d3d;"></div>
<div class="a" style="left:958px;top:201px;width:32.5px;height:26px;overflow:hidden"><div class="t" style="left:12px;top:9.7px;font-size:11px;font-weight:bold;color:#b0b0b0">Stroke</div></div>
<div class="a" style="left:1068px;top:201px;width:32px;height:26px;overflow:hidden"><div class="t" style="left:12px;top:9.7px;font-size:11px;font-weight:bold;color:#b0b0b0">Gradient</div></div>
<div class="a" style="left:1101px;top:201px;width:32px;height:26px;overflow:hidden"><div class="t" style="left:11.5px;top:9.7px;font-size:11px;font-weight:bold;color:#b0b0b0">CC Libraries</div></div>
<div class="t" style="left:1008px;top:209.69px;font-size:11px;color:#f2f2f2;font-weight:bold;letter-spacing:-0.3px">Swatches</div>
<svg width="1366" height="727" style="left:0;top:0" viewBox="0 0 1366 727"><path d="M998 214.5 l2.5 -3 l2.5 3 M998 216.5 l2.5 3 l2.5 -3" fill="none" stroke="#c0c0c0" stroke-width="1"/><path d="M1158 212.5 l3 2.7 l-3 2.7 M1163 212.5 l3 2.7 l-3 2.7" fill="none" stroke="#e0e0e0" stroke-width="1.4"/><rect x="1174" y="209" width="1.2" height="10.5" fill="#b0b0b0"/><path d="M1182 211 h10.5 M1182 213.2 h10.5 M1182 215.4 h10.5 M1182 217.6 h10.5" stroke="#d0d0d0" stroke-width="1"/><rect x="975" y="246" width="18.5" height="18" fill="#fff"/><rect x="979" y="250" width="10" height="10" fill="#535353"/><path d="M976 263 l16.5 -16" stroke="#f00" stroke-width="1.8"/><rect x="965" y="236" width="19.5" height="19" fill="#263e8c"/><path d="M989 237 Q992.5 237 992.5 240" fill="none" stroke="#c8c8c8" stroke-width="1.1"/><path d="M987.5 237 l2 -1.7 v3.4z M992.5 242.3 l-1.7 -2 h3.4z" fill="#c8c8c8"/></svg>
<div class="a" style="left:1003px;top:239px;width:19px;height:19px;background:#333333;border-radius:3px"></div>
<svg width="1366" height="727" style="left:0;top:0" viewBox="0 0 1366 727"><rect x="1008.5" y="244.5" width="8" height="8" fill="none" stroke="#c8c8c8" stroke-width="1.3"/></svg>
<div class="t" style="left:1029px;top:242.92px;font-size:12.5px;color:#c8c8c8;font-weight:bold;font-family:&quot;Liberation Serif&quot;,serif">T</div>
<div class="t" style="left:1080px;top:243.69px;font-size:11px;color:#e0e0e0;font-weight:normal;">Tint:</div>
<div class="a" style="left:1106px;top:238px;width:53px;height:21px;border:1px solid #6a6a6a;border-radius:4px;background:#474747"></div>
<div class="a" style="left:1140px;top:239px;width:1px;height:19px;background:#6a6a6a;"></div>
<div class="t" style="left:1110.5px;top:244.53px;font-size:10px;color:#f0f0f0;font-weight:bold;letter-spacing:-0.5px">100</div>
<svg width="1366" height="727" style="left:0;top:0" viewBox="0 0 1366 727"><path d="M1147.5 244.5 l3.5 4 l-3.5 4" fill="none" stroke="#d0d0d0" stroke-width="1.1"/></svg>
<div class="t" style="left:1161px;top:244.69px;font-size:11px;color:#e8e8e8;font-weight:bold;">%</div>
<div class="a" style="left:959px;top:268px;width:226px;height:66px;background:#4f4f4f;"></div>
<div class="a" style="left:959px;top:289px;width:226px;height:1px;background:#5a5a5a;"></div>
<div class="a" style="left:959px;top:311px;width:226px;height:1px;background:#5a5a5a;"></div>
<div class="a" style="left:959px;top:312px;width:226px;height:21.5px;background:#4b6682;"></div>
<div class="a" style="left:959px;top:267px;width:238px;height:1px;background:#5a5a5a;"></div>
<div class="a" style="left:977px;top:272px;width:13px;height:13px;background:#2a2a2a;"></div>
<div class="a" style="left:978px;top:273px;width:11px;height:11px;background:#d42a2a;"></div>
<div class="t" style="left:997px;top:274.54px;font-size:10px;color:#e6e6e6;font-weight:normal;letter-spacing:-0.1px">C=15 M=100 Y=100 K=0</div>
<svg width="1366" height="727" style="left:0;top:0" viewBox="0 0 1366 727"><rect x="1143" y="273" width="11" height="11" fill="#e8e8e8"/><rect x="1144.0" y="274.0" width="1.8" height="1.8" fill="#8a8a8a"/><rect x="1144.0" y="277.6" width="1.8" height="1.8" fill="#8a8a8a"/><rect x="1144.0" y="281.2" width="1.8" height="1.8" fill="#8a8a8a"/><rect x="1145.8" y="275.8" width="1.8" height="1.8" fill="#8a8a8a"/><rect x="1145.8" y="279.4" width="1.8" height="1.8" fill="#8a8a8a"/><rect x="1147.6" y="274.0" width="1.8" height="1.8" fill="#8a8a8a"/><rect x="1147.6" y="277.6" width="1.8" height="1.8" fill="#8a8a8a"/><rect x="1147.6" y="281.2" width="1.8" height="1.8" fill="#8a8a8a"/><rect x="1149.4" y="275.8" width="1.8" height="1.8" fill="#8a8a8a"/><rect x="1149.4" y="279.4" width="1.8" height="1.8" fill="#8a8a8a"/><rect x="1151.2" y="274.0" width="1.8" height="1.8" fill="#8a8a8a"/><rect x="1151.2" y="277.6" width="1.8" height="1.8" fill="#8a8a8a"/><rect x="1151.2" y="281.2" width="1.8" height="1.8" fill="#8a8a8a"/><rect x="1159" y="273" width="11" height="11" fill="#e8e8e8"/><path d="M1160 274 h9 l-4.5 4.5z" fill="#ff00ff"/><path d="M1160 274 v9 l4.5 -4.5z" fill="#00ffff"/><path d="M1169 274 v9 l-4.5 -4.5z" fill="#ffff00"/><path d="M1160 283 h9 l-4.5 -4.5z" fill="#000"/></svg>
<div class="a" style="left:977px;top:294px;width:13px;height:13px;background:#2a2a2a;"></div>
<div class="a" style="left:978px;top:295px;width:11px;height:11px;background:#3bab4a;"></div>
<div class="t" style="left:997px;top:296.54px;font-size:10px;color:#e6e6e6;font-weight:normal;letter-spacing:-0.1px">C=75 M=5 Y=100 K=0</div>
<svg width="1366" height="727" style="left:0;top:0" viewBox="0 0 1366 727"><rect x="1143" y="295" width="11" height="11" fill="#e8e8e8"/><rect x="1144.0" y="296.0" width="1.8" height="1.8" fill="#8a8a8a"/><rect x="1144.0" y="299.6" width="1.8" height="1.8" fill="#8a8a8a"/><rect x="1144.0" y="303.2" width="1.8" height="1.8" fill="#8a8a8a"/><rect x="1145.8" y="297.8" width="1.8" height="1.8" fill="#8a8a8a"/><rect x="1145.8" y="301.4" width="1.8" height="1.8" fill="#8a8a8a"/><rect x="1147.6" y="296.0" width="1.8" height="1.8" fill="#8a8a8a"/><rect x="1147.6" y="299.6" width="1.8" height="1.8" fill="#8a8a8a"/><rect x="1147.6" y="303.2" width="1.8" height="1.8" fill="#8a8a8a"/><rect x="1149.4" y="297.8" width="1.8" height="1.8" fill="#8a8a8a"/><rect x="1149.4" y="301.4" width="1.8" height="1.8" fill="#8a8a8a"/><rect x="1151.2" y="296.0" width="1.8" height="1.8" fill="#8a8a8a"/><rect x="1151.2" y="299.6" width="1.8" height="1.8" fill="#8a8a8a"/><rect x="1151.2" y="303.2" width="1.8" height="1.8" fill="#8a8a8a"/><rect x="1159" y="295" width="11" height="11" fill="#e8e8e8"/><path d="M1160 296 h9 l-4.5 4.5z" fill="#ff00ff"/><path d="M1160 296 v9 l4.5 -4.5z" fill="#00ffff"/><path d="M1169 296 v9 l-4.5 -4.5z" fill="#ffff00"/><path d="M1160 305 h9 l-4.5 -4.5z" fill="#000"/></svg>
<div class="a" style="left:977px;top:316px;width:13px;height:13px;background:#2a2a2a;"></div>
<div class="a" style="left:978px;top:317px;width:11px;height:11px;background:#263e8c;"></div>
<div class="t" style="left:997px;top:317.69px;font-size:11px;color:#e6e6e6;font-weight:bold;letter-spacing:0.15px">C=100 M=90 Y=10 K=0</div>
<svg width="1366" height="727" style="left:0;top:0" viewBox="0 0 1366 727"><rect x="1143" y="317" width="11" height="11" fill="#e8e8e8"/><rect x="1144.0" y="318.0" width="1.8" height="1.8" fill="#8a8a8a"/><rect x="1144.0" y="321.6" width="1.8" height="1.8" fill="#8a8a8a"/><rect x="1144.0" y="325.2" width="1.8" height="1.8" fill="#8a8a8a"/><rect x="1145.8" y="319.8" width="1.8" height="1.8" fill="#8a8a8a"/><rect x="1145.8" y="323.4" width="1.8" height="1.8" fill="#8a8a8a"/><rect x="1147.6" y="318.0" width="1.8" height="1.8" fill="#8a8a8a"/><rect x="1147.6" y="321.6" width="1.8" height="1.8" fill="#8a8a8a"/><rect x="1147.6" y="325.2" width="1.8" height="1.8" fill="#8a8a8a"/><rect x="1149.4" y="319.8" width="1.8" height="1.8" fill="#8a8a8a"/><rect x="1149.4" y="323.4" width="1.8" height="1.8" fill="#8a8a8a"/><rect x="1151.2" y="318.0" width="1.8" height="1.8" fill="#8a8a8a"/><rect x="1151.2" y="321.6" width="1.8" height="1.8" fill="#8a8a8a"/><rect x="1151.2" y="325.2" width="1.8" height="1.8" fill="#8a8a8a"/><rect x="1159" y="317" width="11" height="11" fill="#e8e8e8"/><path d="M1160 318 h9 l-4.5 4.5z" fill="#ff00ff"/><path d="M1160 318 v9 l4.5 -4.5z" fill="#00ffff"/><path d="M1169 318 v9 l-4.5 -4.5z" fill="#ffff00"/><path d="M1160 327 h9 l-4.5 -4.5z" fill="#000"/></svg>
<div class="a" style="left:1185px;top:268px;width:12px;height:66px;background:#474747;"></div>
<div class="a" style="left:1186px;top:297px;width:10px;height:25px;border-radius:5px;background:#6a6a6a"></div>
<svg width="1366" height="727" style="left:0;top:0" viewBox="0 0 1366 727"><path d="M1187 276 l3.5 -3 l3.5 3 M1187 325.5 l3.5 3 l3.5 -3" fill="none" stroke="#a0a0a0" stroke-width="1"/></svg>
<svg width="1366" height="727" style="left:0;top:0" viewBox="0 0 1366 727"><path d="M968 346.5 v-5 h9 v12 h-5" fill="none" stroke="#c8c8c8" stroke-width="1.2"/><path d="M971 343 h7" stroke="#c8c8c8"/><path d="M965 349.5 h6" stroke="#c8c8c8" stroke-width="1.5"/><path d="M970 346.5 l3 3 l-3 3z" fill="#c8c8c8"/><rect x="974" y="343" width="3" height="4" fill="#c8c8c8"/><rect x="1078.5" y="342.5" width="2.8" height="2.8" fill="#c8c8c8"/><rect x="1078.5" y="346.1" width="2.8" height="2.8" fill="#c8c8c8"/><rect x="1078.5" y="349.7" width="2.8" height="2.8" fill="#c8c8c8"/><rect x="1082.1" y="342.5" width="2.8" height="2.8" fill="#c8c8c8"/><rect x="1082.1" y="346.1" width="2.8" height="2.8" fill="#c8c8c8"/><rect x="1082.1" y="349.7" width="2.8" height="2.8" fill="#c8c8c8"/><rect x="1085.7" y="342.5" width="2.8" height="2.8" fill="#c8c8c8"/><rect x="1085.7" y="346.1" width="2.8" height="2.8" fill="#c8c8c8"/><rect x="1085.7" y="349.7" width="2.8" height="2.8" fill="#c8c8c8"/><rect x="1082" y="349.5" width="2.8" height="2.8" fill="#535353"/><path d="M1091 353 h3 l-1.5 2z" fill="#c8c8c8"/><path d="M1106 343 h5 l1 1.5 h7 v9.5 h-13z" fill="#c8c8c8"/><rect x="1136.5" y="343.5" width="10.5" height="10.5" fill="none" stroke="#c8c8c8" stroke-width="1.1"/><path d="M1141.7 345.8 v6 M1138.7 348.8 h6" stroke="#c8c8c8" stroke-width="1.2"/><path d="M1163 344 h11 M1166.5 344 v-1.5 h4 v1.5" fill="none" stroke="#c8c8c8" stroke-width="1.2"/><path d="M1164.5 345.5 v8.5 h8 v-8.5" fill="none" stroke="#c8c8c8" stroke-width="1.2"/><path d="M1167 346.5 v6 M1170 346.5 v6" stroke="#c8c8c8" stroke-width="1"/></svg>
<div class="a" style="left:958px;top:361px;width:239px;height:7px;background:#535353;"></div>
<div class="a" style="left:957px;top:360px;width:241px;height:1px;background:#3a3a3a;"></div>
<svg width="1366" height="727" style="left:0;top:0" viewBox="0 0 1366 727"><rect x="1068.0" y="362" width="1" height="4" fill="#2e2e2e"/><rect x="1069.9" y="362" width="1" height="4" fill="#2e2e2e"/><rect x="1071.8" y="362" width="1" height="4" fill="#2e2e2e"/><rect x="1073.7" y="362" width="1" height="4" fill="#2e2e2e"/><rect x="1075.6" y="362" width="1" height="4" fill="#2e2e2e"/><rect x="1077.5" y="362" width="1" height="4" fill="#2e2e2e"/><rect x="1079.4" y="362" width="1" height="4" fill="#2e2e2e"/><rect x="1081.3" y="362" width="1" height="4" fill="#2e2e2e"/><rect x="1083.2" y="362" width="1" height="4" fill="#2e2e2e"/><rect x="1085.1" y="362" width="1" height="4" fill="#2e2e2e"/></svg>
<div class="a" style="left:382px;top:141px;width:1px;height:563px;background:#444444;"></div>
<div class="a" style="left:384px;top:24px;width:330px;height:614px;background:#f2f2f2;border:1px solid #cccccc;box-shadow:2px 2px 2px rgba(0,0,0,0.45)"></div>
<div class="t" style="left:419px;top:31.84px;font-size:12px;color:#000;font-weight:normal;">Arrange</div>
<div class="t" style="left:419px;top:53.84px;font-size:12px;color:#000;font-weight:normal;">Workspace</div>
<div class="t" style="left:419px;top:75.84px;font-size:12px;color:#000;font-weight:normal;letter-spacing:-0.2px">Find Extensions on Exchange...</div>
<div class="a" style="left:415px;top:96px;width:295px;height:1px;background:#d4d4d4;"></div>
<div class="t" style="left:419px;top:104.84px;font-size:12px;color:#000;font-weight:normal;">Articles</div>
<div class="t" style="left:419px;top:126.84px;font-size:12px;color:#000;font-weight:normal;">CC Libraries</div>
<div class="a" style="left:387px;top:144px;width:324px;height:22px;background:#91c9f7;"></div>
<div class="t" style="left:419px;top:148.84px;font-size:12px;color:#000;font-weight:normal;">Color</div>
<div class="t" style="left:419px;top:170.84px;font-size:12px;color:#000;font-weight:normal;">Comments</div>
<div class="a" style="left:387px;top:188px;width:22px;height:22px;background:#91c9f7;"></div>
<div class="t" style="left:419px;top:192.84px;font-size:12px;color:#000;font-weight:normal;">Control</div>
<div class="t" style="left:692px;top:192.84px;font-size:12px;color:#000;font-weight:normal;transform:translateX(-100%)">Ctrl+Alt+6</div>
<div class="t" style="left:419px;top:214.84px;font-size:12px;color:#000;font-weight:normal;">Editorial</div>
<div class="t" style="left:419px;top:236.84px;font-size:12px;color:#000;font-weight:normal;">Effects</div>
<div class="t" style="left:692px;top:236.84px;font-size:12px;color:#000;font-weight:normal;transform:translateX(-100%)">Ctrl+Shift+F10</div>
<div class="t" style="left:419px;top:258.84px;font-size:12px;color:#000;font-weight:normal;">Info</div>
<div class="t" style="left:692px;top:258.84px;font-size:12px;color:#000;font-weight:normal;transform:translateX(-100%)">F8</div>
<div class="t" style="left:419px;top:280.84px;font-size:12px;color:#000;font-weight:normal;">Interactive</div>
<div class="t" style="left:419px;top:302.84px;font-size:12px;color:#000;font-weight:normal;">Layers</div>
<div class="t" style="left:692px;top:302.84px;font-size:12px;color:#000;font-weight:normal;transform:translateX(-100%)">F7</div>
<div class="t" style="left:419px;top:324.84px;font-size:12px;color:#000;font-weight:normal;">Learn</div>
<div class="t" style="left:419px;top:346.84px;font-size:12px;color:#000;font-weight:normal;">Links</div>
<div class="t" style="left:692px;top:346.84px;font-size:12px;color:#000;font-weight:normal;transform:translateX(-100%)">Ctrl+Shift+D</div>
<div class="t" style="left:419px;top:368.84px;font-size:12px;color:#000;font-weight:normal;">Object &amp; Layout</div>
<div class="t" style="left:419px;top:390.84px;font-size:12px;color:#000;font-weight:normal;">Output</div>
<div class="t" style="left:419px;top:412.84px;font-size:12px;color:#000;font-weight:normal;">Overlays</div>
<div class="t" style="left:419px;top:434.84px;font-size:12px;color:#000;font-weight:normal;">Pages</div>
<div class="t" style="left:692px;top:434.84px;font-size:12px;color:#000;font-weight:normal;transform:translateX(-100%)">F12</div>
<div class="t" style="left:419px;top:456.84px;font-size:12px;color:#000;font-weight:normal;">Properties</div>
<div class="t" style="left:419px;top:478.84px;font-size:12px;color:#000;font-weight:normal;">Stroke</div>
<div class="t" style="left:692px;top:478.84px;font-size:12px;color:#000;font-weight:normal;transform:translateX(-100%)">F10</div>
<div class="t" style="left:419px;top:500.84px;font-size:12px;color:#000;font-weight:normal;">Styles</div>
<div class="t" style="left:419px;top:522.84px;font-size:12px;color:#000;font-weight:normal;">Text Wrap</div>
<div class="t" style="left:692px;top:522.84px;font-size:12px;color:#000;font-weight:normal;transform:translateX(-100%)">Ctrl+Alt+W</div>
<div class="a" style="left:387px;top:540px;width:22px;height:22px;background:#91c9f7;"></div>
<div class="t" style="left:419px;top:544.84px;font-size:12px;color:#000;font-weight:normal;">Tools</div>
<div class="t" style="left:419px;top:566.84px;font-size:12px;color:#000;font-weight:normal;">Type &amp; Tables</div>
<div class="t" style="left:419px;top:588.84px;font-size:12px;color:#000;font-weight:normal;">Utilities</div>
<div class="a" style="left:415px;top:609px;width:295px;height:1px;background:#d4d4d4;"></div>
<div class="a" style="left:387px;top:613px;width:22px;height:22px;background:#91c9f7;"></div>
<div class="t" style="left:419px;top:617.84px;font-size:12px;color:#000;font-weight:normal;">1 *Untitled-1 @ 53%</div>
<svg width="1366" height="727" style="left:0;top:0" viewBox="0 0 1366 727"><path d="M697.2 34.5 l3.5 3.5 l-3.5 3.5" fill="none" stroke="#404040" stroke-width="1.1"/><path d="M697.2 56.5 l3.5 3.5 l-3.5 3.5" fill="none" stroke="#404040" stroke-width="1.1"/><path d="M697.2 151.5 l3.5 3.5 l-3.5 3.5" fill="none" stroke="#404040" stroke-width="1.1"/><path d="M697.2 173.5 l3.5 3.5 l-3.5 3.5" fill="none" stroke="#404040" stroke-width="1.1"/><path d="M393.5 197.5 l4 4 l5.5 -6" fill="none" stroke="#3c3c3c" stroke-width="1.4"/><path d="M697.2 217.5 l3.5 3.5 l-3.5 3.5" fill="none" stroke="#404040" stroke-width="1.1"/><path d="M697.2 283.5 l3.5 3.5 l-3.5 3.5" fill="none" stroke="#404040" stroke-width="1.1"/><path d="M697.2 371.5 l3.5 3.5 l-3.5 3.5" fill="none" stroke="#404040" stroke-width="1.1"/><path d="M697.2 393.5 l3.5 3.5 l-3.5 3.5" fill="none" stroke="#404040" stroke-width="1.1"/><path d="M697.2 503.5 l3.5 3.5 l-3.5 3.5" fill="none" stroke="#404040" stroke-width="1.1"/><path d="M393.5 549.5 l4 4 l5.5 -6" fill="none" stroke="#3c3c3c" stroke-width="1.4"/><path d="M697.2 569.5 l3.5 3.5 l-3.5 3.5" fill="none" stroke="#404040" stroke-width="1.1"/><path d="M697.2 591.5 l3.5 3.5 l-3.5 3.5" fill="none" stroke="#404040" stroke-width="1.1"/><path d="M393.5 622.5 l4 4 l5.5 -6" fill="none" stroke="#3c3c3c" stroke-width="1.4"/></svg>
<div class="a" style="left:708px;top:141px;width:212px;height:94px;background:#f2f2f2;border:1px solid #cccccc;box-shadow:2px 2px 2px rgba(0,0,0,0.45)"></div>
<div class="a" style="left:710px;top:166px;width:207px;height:22px;background:#91c9f7;"></div>
<div class="a" style="left:710px;top:210px;width:22px;height:22px;background:#91c9f7;"></div>
<svg width="1366" height="727" style="left:0;top:0" viewBox="0 0 1366 727"><path d="M716.5 219.5 l4 4 l5.5 -6" fill="none" stroke="#3c3c3c" stroke-width="1.4"/></svg>
<div class="t" style="left:742px;top:148.84px;font-size:12px;color:#000;font-weight:normal;letter-spacing:-0.12px">Adobe Color Themes</div>
<div class="t" style="left:742px;top:170.84px;font-size:12px;color:#000;font-weight:normal;letter-spacing:-0.12px">Color</div>
<div class="t" style="left:899px;top:170.84px;font-size:12px;color:#000;font-weight:normal;transform:translateX(-100%)">F6</div>
<div class="t" style="left:742px;top:192.84px;font-size:12px;color:#000;font-weight:normal;letter-spacing:-0.12px">Gradient</div>
<div class="t" style="left:742px;top:214.84px;font-size:12px;color:#000;font-weight:normal;letter-spacing:-0.12px">Swatches</div>
<div class="t" style="left:899px;top:214.84px;font-size:12px;color:#000;font-weight:normal;transform:translateX(-100%)">F5</div>
</body></html>
